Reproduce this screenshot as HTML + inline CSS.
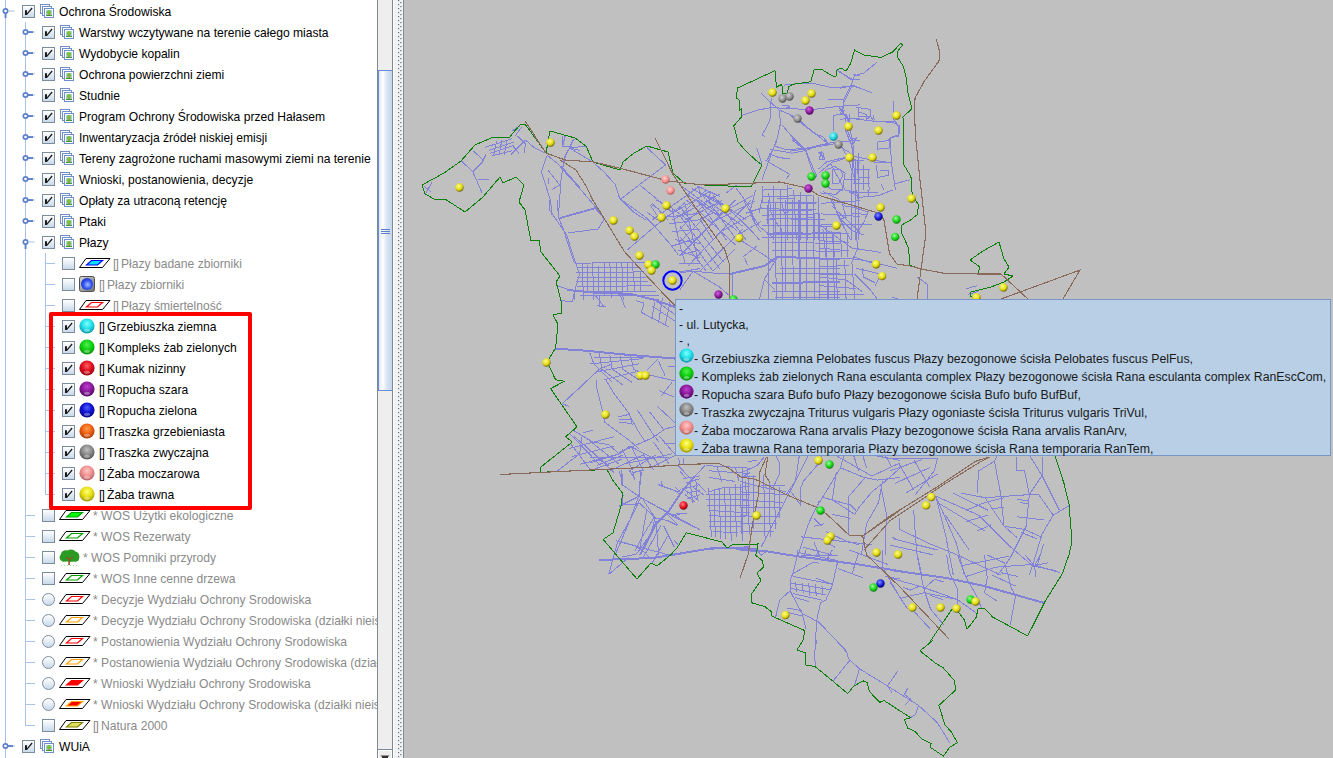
<!DOCTYPE html>
<html><head><meta charset="utf-8">
<style>
html,body{margin:0;padding:0;width:1333px;height:758px;overflow:hidden;background:#fff;font-family:"Liberation Sans", sans-serif;}
#left{position:absolute;left:0;top:0;width:377px;height:758px;background:#fff;overflow:hidden;}
.vl{position:absolute;width:1px;background:#a9c3e6;}
.hl{position:absolute;height:1px;background:#a9c3e6;}
.cb{position:absolute;width:11px;height:11px;border:1px solid #7d8c9b;background:linear-gradient(#ffffff,#c9d9ea);}
.rb{position:absolute;width:11px;height:11px;border:1px solid #7d8c9b;border-radius:50%;background:linear-gradient(#ffffff,#c9d9ea);}
.ic{position:absolute;}
.tx{position:absolute;font-size:12.1px;line-height:18px;white-space:nowrap;}
#redbox{position:absolute;left:49px;top:312px;width:195px;height:190px;border:4px solid #ff0000;border-radius:2px;}
#sb{position:absolute;left:377px;top:0;width:14px;height:758px;border-left:1px solid #7b8a99;border-right:1px solid #7b8a99;background:#eeeeee;}
#thumb{position:absolute;left:0;top:70px;width:14px;height:321px;background:linear-gradient(90deg,#d4e1f1 0%,#ffffff 35%,#dce7f3 60%,#c4d6ec 100%);}
#split{position:absolute;left:393px;top:0;width:10px;height:758px;background:#f2f2f2;border-left:1px solid #fff;}
#splitline{position:absolute;left:403px;top:0;width:1px;height:758px;background:#7b8a99;}
#map{position:absolute;left:404px;top:0;width:929px;height:758px;background:#c0c0c0;overflow:hidden;}
#tip{position:absolute;left:675px;top:299px;width:654px;height:155px;background:#b8cfe6;border:1px solid #7896c8;}
.tl{position:absolute;left:3px;font-size:12.3px;white-space:nowrap;color:#1a1a1a;}
</style></head><body>
<div id="left">
<div class="vl" style="left:5px;top:0;height:758px"></div>
<div class="vl" style="left:25px;top:22px;height:704px"></div>
<div class="vl" style="left:45px;top:253px;height:242px"></div>
<svg class="ic" style="left:1px;top:6px" width="14" height="12" viewBox="0 0 14 12"><circle cx="4.5" cy="5" r="2.2" fill="#fff" stroke="#5b7fc9" stroke-width="1.7"/><rect x="3.6" y="7.2" width="1.9" height="4.8" fill="#5b7fc9"/><rect x="7.5" y="4.5" width="6" height="1" fill="#a9c3e6"/></svg>
<div class="cb" style="left:22px;top:5px"><svg width="13" height="13" style="position:absolute;left:-1px;top:-1px"><path d="M3 5.2 H5 V8.2 L9.6 2.6 L10.6 3.6 L5 10 H3 Z" fill="#1a1a1a"/></svg></div>
<svg class="ic" style="left:40px;top:4px" width="15" height="15" viewBox="0 0 15 15"><rect x="0.5" y="0.5" width="9" height="9" fill="#fff" stroke="#6f8fcb"/><rect x="2.5" y="2.5" width="9" height="9" fill="#fff" stroke="#6f8fcb"/><rect x="4.5" y="4.5" width="9" height="9" fill="#fff" stroke="#6f8fcb"/><rect x="6" y="6" width="6" height="6" fill="#b9d3f0"/><circle cx="9" cy="8.3" r="2.3" fill="#7cc23a"/><rect x="8.4" y="9.8" width="1.3" height="1.4" fill="#c8743a"/><rect x="6" y="10.8" width="6" height="1.2" fill="#3f9a2a"/></svg>
<div class="tx" style="left:59px;top:3px;color:#000">Ochrona Środowiska</div>
<svg class="ic" style="left:21px;top:27px" width="16" height="10" viewBox="0 0 16 10"><circle cx="4.5" cy="5" r="2.2" fill="#fff" stroke="#5b7fc9" stroke-width="1.7"/><rect x="7" y="4.1" width="5" height="1.9" fill="#5b7fc9"/><rect x="12" y="4.5" width="2" height="1" fill="#a9c3e6"/></svg>
<div class="cb" style="left:42px;top:26px"><svg width="13" height="13" style="position:absolute;left:-1px;top:-1px"><path d="M3 5.2 H5 V8.2 L9.6 2.6 L10.6 3.6 L5 10 H3 Z" fill="#1a1a1a"/></svg></div>
<svg class="ic" style="left:60px;top:25px" width="15" height="15" viewBox="0 0 15 15"><rect x="0.5" y="0.5" width="9" height="9" fill="#fff" stroke="#6f8fcb"/><rect x="2.5" y="2.5" width="9" height="9" fill="#fff" stroke="#6f8fcb"/><rect x="4.5" y="4.5" width="9" height="9" fill="#fff" stroke="#6f8fcb"/><rect x="6" y="6" width="6" height="6" fill="#b9d3f0"/><circle cx="9" cy="8.3" r="2.3" fill="#7cc23a"/><rect x="8.4" y="9.8" width="1.3" height="1.4" fill="#c8743a"/><rect x="6" y="10.8" width="6" height="1.2" fill="#3f9a2a"/></svg>
<div class="tx" style="left:79px;top:24px;color:#000">Warstwy wczytywane na terenie całego miasta</div>
<svg class="ic" style="left:21px;top:48px" width="16" height="10" viewBox="0 0 16 10"><circle cx="4.5" cy="5" r="2.2" fill="#fff" stroke="#5b7fc9" stroke-width="1.7"/><rect x="7" y="4.1" width="5" height="1.9" fill="#5b7fc9"/><rect x="12" y="4.5" width="2" height="1" fill="#a9c3e6"/></svg>
<div class="cb" style="left:42px;top:47px"><svg width="13" height="13" style="position:absolute;left:-1px;top:-1px"><path d="M3 5.2 H5 V8.2 L9.6 2.6 L10.6 3.6 L5 10 H3 Z" fill="#1a1a1a"/></svg></div>
<svg class="ic" style="left:60px;top:46px" width="15" height="15" viewBox="0 0 15 15"><rect x="0.5" y="0.5" width="9" height="9" fill="#fff" stroke="#6f8fcb"/><rect x="2.5" y="2.5" width="9" height="9" fill="#fff" stroke="#6f8fcb"/><rect x="4.5" y="4.5" width="9" height="9" fill="#fff" stroke="#6f8fcb"/><rect x="6" y="6" width="6" height="6" fill="#b9d3f0"/><circle cx="9" cy="8.3" r="2.3" fill="#7cc23a"/><rect x="8.4" y="9.8" width="1.3" height="1.4" fill="#c8743a"/><rect x="6" y="10.8" width="6" height="1.2" fill="#3f9a2a"/></svg>
<div class="tx" style="left:79px;top:45px;color:#000">Wydobycie kopalin</div>
<svg class="ic" style="left:21px;top:69px" width="16" height="10" viewBox="0 0 16 10"><circle cx="4.5" cy="5" r="2.2" fill="#fff" stroke="#5b7fc9" stroke-width="1.7"/><rect x="7" y="4.1" width="5" height="1.9" fill="#5b7fc9"/><rect x="12" y="4.5" width="2" height="1" fill="#a9c3e6"/></svg>
<div class="cb" style="left:42px;top:68px"><svg width="13" height="13" style="position:absolute;left:-1px;top:-1px"><path d="M3 5.2 H5 V8.2 L9.6 2.6 L10.6 3.6 L5 10 H3 Z" fill="#1a1a1a"/></svg></div>
<svg class="ic" style="left:60px;top:67px" width="15" height="15" viewBox="0 0 15 15"><rect x="0.5" y="0.5" width="9" height="9" fill="#fff" stroke="#6f8fcb"/><rect x="2.5" y="2.5" width="9" height="9" fill="#fff" stroke="#6f8fcb"/><rect x="4.5" y="4.5" width="9" height="9" fill="#fff" stroke="#6f8fcb"/><rect x="6" y="6" width="6" height="6" fill="#b9d3f0"/><circle cx="9" cy="8.3" r="2.3" fill="#7cc23a"/><rect x="8.4" y="9.8" width="1.3" height="1.4" fill="#c8743a"/><rect x="6" y="10.8" width="6" height="1.2" fill="#3f9a2a"/></svg>
<div class="tx" style="left:79px;top:66px;color:#000">Ochrona powierzchni ziemi</div>
<svg class="ic" style="left:21px;top:90px" width="16" height="10" viewBox="0 0 16 10"><circle cx="4.5" cy="5" r="2.2" fill="#fff" stroke="#5b7fc9" stroke-width="1.7"/><rect x="7" y="4.1" width="5" height="1.9" fill="#5b7fc9"/><rect x="12" y="4.5" width="2" height="1" fill="#a9c3e6"/></svg>
<div class="cb" style="left:42px;top:89px"><svg width="13" height="13" style="position:absolute;left:-1px;top:-1px"><path d="M3 5.2 H5 V8.2 L9.6 2.6 L10.6 3.6 L5 10 H3 Z" fill="#1a1a1a"/></svg></div>
<svg class="ic" style="left:60px;top:88px" width="15" height="15" viewBox="0 0 15 15"><rect x="0.5" y="0.5" width="9" height="9" fill="#fff" stroke="#6f8fcb"/><rect x="2.5" y="2.5" width="9" height="9" fill="#fff" stroke="#6f8fcb"/><rect x="4.5" y="4.5" width="9" height="9" fill="#fff" stroke="#6f8fcb"/><rect x="6" y="6" width="6" height="6" fill="#b9d3f0"/><circle cx="9" cy="8.3" r="2.3" fill="#7cc23a"/><rect x="8.4" y="9.8" width="1.3" height="1.4" fill="#c8743a"/><rect x="6" y="10.8" width="6" height="1.2" fill="#3f9a2a"/></svg>
<div class="tx" style="left:79px;top:87px;color:#000">Studnie</div>
<svg class="ic" style="left:21px;top:111px" width="16" height="10" viewBox="0 0 16 10"><circle cx="4.5" cy="5" r="2.2" fill="#fff" stroke="#5b7fc9" stroke-width="1.7"/><rect x="7" y="4.1" width="5" height="1.9" fill="#5b7fc9"/><rect x="12" y="4.5" width="2" height="1" fill="#a9c3e6"/></svg>
<div class="cb" style="left:42px;top:110px"><svg width="13" height="13" style="position:absolute;left:-1px;top:-1px"><path d="M3 5.2 H5 V8.2 L9.6 2.6 L10.6 3.6 L5 10 H3 Z" fill="#1a1a1a"/></svg></div>
<svg class="ic" style="left:60px;top:109px" width="15" height="15" viewBox="0 0 15 15"><rect x="0.5" y="0.5" width="9" height="9" fill="#fff" stroke="#6f8fcb"/><rect x="2.5" y="2.5" width="9" height="9" fill="#fff" stroke="#6f8fcb"/><rect x="4.5" y="4.5" width="9" height="9" fill="#fff" stroke="#6f8fcb"/><rect x="6" y="6" width="6" height="6" fill="#b9d3f0"/><circle cx="9" cy="8.3" r="2.3" fill="#7cc23a"/><rect x="8.4" y="9.8" width="1.3" height="1.4" fill="#c8743a"/><rect x="6" y="10.8" width="6" height="1.2" fill="#3f9a2a"/></svg>
<div class="tx" style="left:79px;top:108px;color:#000">Program Ochrony Środowiska przed Hałasem</div>
<svg class="ic" style="left:21px;top:132px" width="16" height="10" viewBox="0 0 16 10"><circle cx="4.5" cy="5" r="2.2" fill="#fff" stroke="#5b7fc9" stroke-width="1.7"/><rect x="7" y="4.1" width="5" height="1.9" fill="#5b7fc9"/><rect x="12" y="4.5" width="2" height="1" fill="#a9c3e6"/></svg>
<div class="cb" style="left:42px;top:131px"><svg width="13" height="13" style="position:absolute;left:-1px;top:-1px"><path d="M3 5.2 H5 V8.2 L9.6 2.6 L10.6 3.6 L5 10 H3 Z" fill="#1a1a1a"/></svg></div>
<svg class="ic" style="left:60px;top:130px" width="15" height="15" viewBox="0 0 15 15"><rect x="0.5" y="0.5" width="9" height="9" fill="#fff" stroke="#6f8fcb"/><rect x="2.5" y="2.5" width="9" height="9" fill="#fff" stroke="#6f8fcb"/><rect x="4.5" y="4.5" width="9" height="9" fill="#fff" stroke="#6f8fcb"/><rect x="6" y="6" width="6" height="6" fill="#b9d3f0"/><circle cx="9" cy="8.3" r="2.3" fill="#7cc23a"/><rect x="8.4" y="9.8" width="1.3" height="1.4" fill="#c8743a"/><rect x="6" y="10.8" width="6" height="1.2" fill="#3f9a2a"/></svg>
<div class="tx" style="left:79px;top:129px;color:#000">Inwentaryzacja źródeł niskiej emisji</div>
<svg class="ic" style="left:21px;top:153px" width="16" height="10" viewBox="0 0 16 10"><circle cx="4.5" cy="5" r="2.2" fill="#fff" stroke="#5b7fc9" stroke-width="1.7"/><rect x="7" y="4.1" width="5" height="1.9" fill="#5b7fc9"/><rect x="12" y="4.5" width="2" height="1" fill="#a9c3e6"/></svg>
<div class="cb" style="left:42px;top:152px"><svg width="13" height="13" style="position:absolute;left:-1px;top:-1px"><path d="M3 5.2 H5 V8.2 L9.6 2.6 L10.6 3.6 L5 10 H3 Z" fill="#1a1a1a"/></svg></div>
<svg class="ic" style="left:60px;top:151px" width="15" height="15" viewBox="0 0 15 15"><rect x="0.5" y="0.5" width="9" height="9" fill="#fff" stroke="#6f8fcb"/><rect x="2.5" y="2.5" width="9" height="9" fill="#fff" stroke="#6f8fcb"/><rect x="4.5" y="4.5" width="9" height="9" fill="#fff" stroke="#6f8fcb"/><rect x="6" y="6" width="6" height="6" fill="#b9d3f0"/><circle cx="9" cy="8.3" r="2.3" fill="#7cc23a"/><rect x="8.4" y="9.8" width="1.3" height="1.4" fill="#c8743a"/><rect x="6" y="10.8" width="6" height="1.2" fill="#3f9a2a"/></svg>
<div class="tx" style="left:79px;top:150px;color:#000">Tereny zagrożone ruchami masowymi ziemi na terenie</div>
<svg class="ic" style="left:21px;top:174px" width="16" height="10" viewBox="0 0 16 10"><circle cx="4.5" cy="5" r="2.2" fill="#fff" stroke="#5b7fc9" stroke-width="1.7"/><rect x="7" y="4.1" width="5" height="1.9" fill="#5b7fc9"/><rect x="12" y="4.5" width="2" height="1" fill="#a9c3e6"/></svg>
<div class="cb" style="left:42px;top:173px"><svg width="13" height="13" style="position:absolute;left:-1px;top:-1px"><path d="M3 5.2 H5 V8.2 L9.6 2.6 L10.6 3.6 L5 10 H3 Z" fill="#1a1a1a"/></svg></div>
<svg class="ic" style="left:60px;top:172px" width="15" height="15" viewBox="0 0 15 15"><rect x="0.5" y="0.5" width="9" height="9" fill="#fff" stroke="#6f8fcb"/><rect x="2.5" y="2.5" width="9" height="9" fill="#fff" stroke="#6f8fcb"/><rect x="4.5" y="4.5" width="9" height="9" fill="#fff" stroke="#6f8fcb"/><rect x="6" y="6" width="6" height="6" fill="#b9d3f0"/><circle cx="9" cy="8.3" r="2.3" fill="#7cc23a"/><rect x="8.4" y="9.8" width="1.3" height="1.4" fill="#c8743a"/><rect x="6" y="10.8" width="6" height="1.2" fill="#3f9a2a"/></svg>
<div class="tx" style="left:79px;top:171px;color:#000">Wnioski, postanowienia, decyzje</div>
<svg class="ic" style="left:21px;top:195px" width="16" height="10" viewBox="0 0 16 10"><circle cx="4.5" cy="5" r="2.2" fill="#fff" stroke="#5b7fc9" stroke-width="1.7"/><rect x="7" y="4.1" width="5" height="1.9" fill="#5b7fc9"/><rect x="12" y="4.5" width="2" height="1" fill="#a9c3e6"/></svg>
<div class="cb" style="left:42px;top:194px"><svg width="13" height="13" style="position:absolute;left:-1px;top:-1px"><path d="M3 5.2 H5 V8.2 L9.6 2.6 L10.6 3.6 L5 10 H3 Z" fill="#1a1a1a"/></svg></div>
<svg class="ic" style="left:60px;top:193px" width="15" height="15" viewBox="0 0 15 15"><rect x="0.5" y="0.5" width="9" height="9" fill="#fff" stroke="#6f8fcb"/><rect x="2.5" y="2.5" width="9" height="9" fill="#fff" stroke="#6f8fcb"/><rect x="4.5" y="4.5" width="9" height="9" fill="#fff" stroke="#6f8fcb"/><rect x="6" y="6" width="6" height="6" fill="#b9d3f0"/><circle cx="9" cy="8.3" r="2.3" fill="#7cc23a"/><rect x="8.4" y="9.8" width="1.3" height="1.4" fill="#c8743a"/><rect x="6" y="10.8" width="6" height="1.2" fill="#3f9a2a"/></svg>
<div class="tx" style="left:79px;top:192px;color:#000">Opłaty za utraconą retencję</div>
<svg class="ic" style="left:21px;top:216px" width="16" height="10" viewBox="0 0 16 10"><circle cx="4.5" cy="5" r="2.2" fill="#fff" stroke="#5b7fc9" stroke-width="1.7"/><rect x="7" y="4.1" width="5" height="1.9" fill="#5b7fc9"/><rect x="12" y="4.5" width="2" height="1" fill="#a9c3e6"/></svg>
<div class="cb" style="left:42px;top:215px"><svg width="13" height="13" style="position:absolute;left:-1px;top:-1px"><path d="M3 5.2 H5 V8.2 L9.6 2.6 L10.6 3.6 L5 10 H3 Z" fill="#1a1a1a"/></svg></div>
<svg class="ic" style="left:60px;top:214px" width="15" height="15" viewBox="0 0 15 15"><rect x="0.5" y="0.5" width="9" height="9" fill="#fff" stroke="#6f8fcb"/><rect x="2.5" y="2.5" width="9" height="9" fill="#fff" stroke="#6f8fcb"/><rect x="4.5" y="4.5" width="9" height="9" fill="#fff" stroke="#6f8fcb"/><rect x="6" y="6" width="6" height="6" fill="#b9d3f0"/><circle cx="9" cy="8.3" r="2.3" fill="#7cc23a"/><rect x="8.4" y="9.8" width="1.3" height="1.4" fill="#c8743a"/><rect x="6" y="10.8" width="6" height="1.2" fill="#3f9a2a"/></svg>
<div class="tx" style="left:79px;top:213px;color:#000">Ptaki</div>
<svg class="ic" style="left:21px;top:237px" width="14" height="12" viewBox="0 0 14 12"><circle cx="4.5" cy="5" r="2.2" fill="#fff" stroke="#5b7fc9" stroke-width="1.7"/><rect x="3.6" y="7.2" width="1.9" height="4.8" fill="#5b7fc9"/><rect x="7.5" y="4.5" width="6" height="1" fill="#a9c3e6"/></svg>
<div class="cb" style="left:42px;top:236px"><svg width="13" height="13" style="position:absolute;left:-1px;top:-1px"><path d="M3 5.2 H5 V8.2 L9.6 2.6 L10.6 3.6 L5 10 H3 Z" fill="#1a1a1a"/></svg></div>
<svg class="ic" style="left:60px;top:235px" width="15" height="15" viewBox="0 0 15 15"><rect x="0.5" y="0.5" width="9" height="9" fill="#fff" stroke="#6f8fcb"/><rect x="2.5" y="2.5" width="9" height="9" fill="#fff" stroke="#6f8fcb"/><rect x="4.5" y="4.5" width="9" height="9" fill="#fff" stroke="#6f8fcb"/><rect x="6" y="6" width="6" height="6" fill="#b9d3f0"/><circle cx="9" cy="8.3" r="2.3" fill="#7cc23a"/><rect x="8.4" y="9.8" width="1.3" height="1.4" fill="#c8743a"/><rect x="6" y="10.8" width="6" height="1.2" fill="#3f9a2a"/></svg>
<div class="tx" style="left:79px;top:234px;color:#000">Płazy</div>
<div class="hl" style="left:46px;top:263px;width:9px"></div>
<div class="cb" style="left:62px;top:257px"></div>
<svg class="ic" style="left:79px;top:258px" width="32" height="11" viewBox="0 0 32 11"><path d="M0.5 9.5 L7 0.5 L31 0.5 L23.5 9.5 Z" fill="#fff" stroke="#000" stroke-width="1"/><path d="M7.5 7 L12.5 2.5 L23.5 2.5 L18.5 7 Z" fill="#00e0ff" stroke="#0000ff" stroke-width="1.2"/></svg>
<div class="tx" style="left:113px;top:255px;color:#8a8a8a"><span style="letter-spacing:-0.8px">[]</span><span style="letter-spacing:-0.5px"> </span>Płazy badane zbiorniki</div>
<div class="hl" style="left:46px;top:284px;width:9px"></div>
<div class="cb" style="left:62px;top:278px"></div>
<svg class="ic" style="left:79px;top:276px" width="16" height="16" viewBox="0 0 16 16"><defs><linearGradient id="rbx" x1="0" y1="0" x2="1" y2="1"><stop offset="0" stop-color="#d8d8d8"/><stop offset="1" stop-color="#707070"/></linearGradient><radialGradient id="rbb" cx="0.55" cy="0.55" r="0.6"><stop offset="0" stop-color="#a0c0ff"/><stop offset="0.6" stop-color="#3050f0"/><stop offset="1" stop-color="#1a30c0"/></radialGradient></defs><rect x="0.5" y="0.5" width="15" height="15" rx="2" fill="url(#rbx)" stroke="#505050"/><circle cx="8" cy="8" r="6" fill="url(#rbb)"/></svg>
<div class="tx" style="left:99px;top:276px;color:#8a8a8a"><span style="letter-spacing:-0.8px">[]</span><span style="letter-spacing:-0.5px"> </span>Płazy zbiorniki</div>
<div class="hl" style="left:46px;top:305px;width:9px"></div>
<div class="cb" style="left:62px;top:299px"></div>
<svg class="ic" style="left:79px;top:300px" width="32" height="11" viewBox="0 0 32 11"><path d="M0.5 9.5 L7 0.5 L31 0.5 L23.5 9.5 Z" fill="#fff" stroke="#000" stroke-width="1"/><path d="M7.5 7 L12.5 2.5 L23.5 2.5 L18.5 7 Z" fill="#ffffff" stroke="#ff0000" stroke-width="1.2"/></svg>
<div class="tx" style="left:113px;top:297px;color:#8a8a8a"><span style="letter-spacing:-0.8px">[]</span><span style="letter-spacing:-0.5px"> </span>Płazy śmiertelność</div>
<div class="hl" style="left:46px;top:326px;width:9px"></div>
<div class="cb" style="left:62px;top:320px"><svg width="13" height="13" style="position:absolute;left:-1px;top:-1px"><path d="M3 5.2 H5 V8.2 L9.6 2.6 L10.6 3.6 L5 10 H3 Z" fill="#1a1a1a"/></svg></div>
<div class="ic" style="left:79px;top:318px;width:16px;height:16px"><svg width="16" height="16" viewBox="0 0 16 16" style="display:block"><defs><radialGradient id="g1" cx="0.5" cy="0.35" r="0.6"><stop offset="0" stop-color="#80ffff"/><stop offset="0.55" stop-color="#20e0e8"/><stop offset="1" stop-color="#10a0b0"/></radialGradient></defs><circle cx="8" cy="8" r="7.6" fill="url(#g1)"/><ellipse cx="8" cy="12.3" rx="3" ry="1.6" fill="#ffffff" opacity="0.35"/></svg></div>
<div class="tx" style="left:99px;top:318px;color:#000"><span style="letter-spacing:-0.8px">[]</span><span style="letter-spacing:-0.5px"> </span>Grzebiuszka ziemna</div>
<div class="hl" style="left:46px;top:347px;width:9px"></div>
<div class="cb" style="left:62px;top:341px"><svg width="13" height="13" style="position:absolute;left:-1px;top:-1px"><path d="M3 5.2 H5 V8.2 L9.6 2.6 L10.6 3.6 L5 10 H3 Z" fill="#1a1a1a"/></svg></div>
<div class="ic" style="left:79px;top:339px;width:16px;height:16px"><svg width="16" height="16" viewBox="0 0 16 16" style="display:block"><defs><radialGradient id="g2" cx="0.5" cy="0.35" r="0.6"><stop offset="0" stop-color="#50f050"/><stop offset="0.55" stop-color="#10d010"/><stop offset="1" stop-color="#0a9a0a"/></radialGradient></defs><circle cx="8" cy="8" r="7.6" fill="url(#g2)"/><ellipse cx="8" cy="12.3" rx="3" ry="1.6" fill="#ffffff" opacity="0.35"/></svg></div>
<div class="tx" style="left:99px;top:339px;color:#000"><span style="letter-spacing:-0.8px">[]</span><span style="letter-spacing:-0.5px"> </span>Kompleks żab zielonych</div>
<div class="hl" style="left:46px;top:368px;width:9px"></div>
<div class="cb" style="left:62px;top:362px"><svg width="13" height="13" style="position:absolute;left:-1px;top:-1px"><path d="M3 5.2 H5 V8.2 L9.6 2.6 L10.6 3.6 L5 10 H3 Z" fill="#1a1a1a"/></svg></div>
<div class="ic" style="left:79px;top:360px;width:16px;height:16px"><svg width="16" height="16" viewBox="0 0 16 16" style="display:block"><defs><radialGradient id="g3" cx="0.5" cy="0.35" r="0.6"><stop offset="0" stop-color="#ff6060"/><stop offset="0.55" stop-color="#e01020"/><stop offset="1" stop-color="#a00010"/></radialGradient></defs><circle cx="8" cy="8" r="7.6" fill="url(#g3)"/><ellipse cx="8" cy="12.3" rx="3" ry="1.6" fill="#ffffff" opacity="0.35"/></svg></div>
<div class="tx" style="left:99px;top:360px;color:#000"><span style="letter-spacing:-0.8px">[]</span><span style="letter-spacing:-0.5px"> </span>Kumak nizinny</div>
<div class="hl" style="left:46px;top:389px;width:9px"></div>
<div class="cb" style="left:62px;top:383px"><svg width="13" height="13" style="position:absolute;left:-1px;top:-1px"><path d="M3 5.2 H5 V8.2 L9.6 2.6 L10.6 3.6 L5 10 H3 Z" fill="#1a1a1a"/></svg></div>
<div class="ic" style="left:79px;top:381px;width:16px;height:16px"><svg width="16" height="16" viewBox="0 0 16 16" style="display:block"><defs><radialGradient id="g4" cx="0.5" cy="0.35" r="0.6"><stop offset="0" stop-color="#c040d0"/><stop offset="0.55" stop-color="#8a1a9a"/><stop offset="1" stop-color="#5a0a6a"/></radialGradient></defs><circle cx="8" cy="8" r="7.6" fill="url(#g4)"/><ellipse cx="8" cy="12.3" rx="3" ry="1.6" fill="#ffffff" opacity="0.35"/></svg></div>
<div class="tx" style="left:99px;top:381px;color:#000"><span style="letter-spacing:-0.8px">[]</span><span style="letter-spacing:-0.5px"> </span>Ropucha szara</div>
<div class="hl" style="left:46px;top:410px;width:9px"></div>
<div class="cb" style="left:62px;top:404px"><svg width="13" height="13" style="position:absolute;left:-1px;top:-1px"><path d="M3 5.2 H5 V8.2 L9.6 2.6 L10.6 3.6 L5 10 H3 Z" fill="#1a1a1a"/></svg></div>
<div class="ic" style="left:79px;top:402px;width:16px;height:16px"><svg width="16" height="16" viewBox="0 0 16 16" style="display:block"><defs><radialGradient id="g5" cx="0.5" cy="0.35" r="0.6"><stop offset="0" stop-color="#5060ff"/><stop offset="0.55" stop-color="#1010d0"/><stop offset="1" stop-color="#0a0a90"/></radialGradient></defs><circle cx="8" cy="8" r="7.6" fill="url(#g5)"/><ellipse cx="8" cy="12.3" rx="3" ry="1.6" fill="#ffffff" opacity="0.35"/></svg></div>
<div class="tx" style="left:99px;top:402px;color:#000"><span style="letter-spacing:-0.8px">[]</span><span style="letter-spacing:-0.5px"> </span>Ropucha zielona</div>
<div class="hl" style="left:46px;top:431px;width:9px"></div>
<div class="cb" style="left:62px;top:425px"><svg width="13" height="13" style="position:absolute;left:-1px;top:-1px"><path d="M3 5.2 H5 V8.2 L9.6 2.6 L10.6 3.6 L5 10 H3 Z" fill="#1a1a1a"/></svg></div>
<div class="ic" style="left:79px;top:423px;width:16px;height:16px"><svg width="16" height="16" viewBox="0 0 16 16" style="display:block"><defs><radialGradient id="g6" cx="0.5" cy="0.35" r="0.6"><stop offset="0" stop-color="#ffa050"/><stop offset="0.55" stop-color="#f06010"/><stop offset="1" stop-color="#b04008"/></radialGradient></defs><circle cx="8" cy="8" r="7.6" fill="url(#g6)"/><ellipse cx="8" cy="12.3" rx="3" ry="1.6" fill="#ffffff" opacity="0.35"/></svg></div>
<div class="tx" style="left:99px;top:423px;color:#000"><span style="letter-spacing:-0.8px">[]</span><span style="letter-spacing:-0.5px"> </span>Traszka grzebieniasta</div>
<div class="hl" style="left:46px;top:452px;width:9px"></div>
<div class="cb" style="left:62px;top:446px"><svg width="13" height="13" style="position:absolute;left:-1px;top:-1px"><path d="M3 5.2 H5 V8.2 L9.6 2.6 L10.6 3.6 L5 10 H3 Z" fill="#1a1a1a"/></svg></div>
<div class="ic" style="left:79px;top:444px;width:16px;height:16px"><svg width="16" height="16" viewBox="0 0 16 16" style="display:block"><defs><radialGradient id="g7" cx="0.5" cy="0.35" r="0.6"><stop offset="0" stop-color="#c0c0c0"/><stop offset="0.55" stop-color="#8a8a8a"/><stop offset="1" stop-color="#5a5a5a"/></radialGradient></defs><circle cx="8" cy="8" r="7.6" fill="url(#g7)"/><ellipse cx="8" cy="12.3" rx="3" ry="1.6" fill="#ffffff" opacity="0.35"/></svg></div>
<div class="tx" style="left:99px;top:444px;color:#000"><span style="letter-spacing:-0.8px">[]</span><span style="letter-spacing:-0.5px"> </span>Traszka zwyczajna</div>
<div class="hl" style="left:46px;top:473px;width:9px"></div>
<div class="cb" style="left:62px;top:467px"><svg width="13" height="13" style="position:absolute;left:-1px;top:-1px"><path d="M3 5.2 H5 V8.2 L9.6 2.6 L10.6 3.6 L5 10 H3 Z" fill="#1a1a1a"/></svg></div>
<div class="ic" style="left:79px;top:465px;width:16px;height:16px"><svg width="16" height="16" viewBox="0 0 16 16" style="display:block"><defs><radialGradient id="g8" cx="0.5" cy="0.35" r="0.6"><stop offset="0" stop-color="#ffc8c8"/><stop offset="0.55" stop-color="#f09090"/><stop offset="1" stop-color="#c06a6a"/></radialGradient></defs><circle cx="8" cy="8" r="7.6" fill="url(#g8)"/><ellipse cx="8" cy="12.3" rx="3" ry="1.6" fill="#ffffff" opacity="0.35"/></svg></div>
<div class="tx" style="left:99px;top:465px;color:#000"><span style="letter-spacing:-0.8px">[]</span><span style="letter-spacing:-0.5px"> </span>Żaba moczarowa</div>
<div class="hl" style="left:46px;top:494px;width:9px"></div>
<div class="cb" style="left:62px;top:488px"><svg width="13" height="13" style="position:absolute;left:-1px;top:-1px"><path d="M3 5.2 H5 V8.2 L9.6 2.6 L10.6 3.6 L5 10 H3 Z" fill="#1a1a1a"/></svg></div>
<div class="ic" style="left:79px;top:486px;width:16px;height:16px"><svg width="16" height="16" viewBox="0 0 16 16" style="display:block"><defs><radialGradient id="g9" cx="0.5" cy="0.35" r="0.6"><stop offset="0" stop-color="#ffff80"/><stop offset="0.55" stop-color="#e8e010"/><stop offset="1" stop-color="#a8a000"/></radialGradient></defs><circle cx="8" cy="8" r="7.6" fill="url(#g9)"/><ellipse cx="8" cy="12.3" rx="3" ry="1.6" fill="#ffffff" opacity="0.35"/></svg></div>
<div class="tx" style="left:99px;top:486px;color:#000"><span style="letter-spacing:-0.8px">[]</span><span style="letter-spacing:-0.5px"> </span>Żaba trawna</div>
<div class="hl" style="left:26px;top:515px;width:9px"></div>
<div class="cb" style="left:42px;top:509px"></div>
<svg class="ic" style="left:59px;top:510px" width="32" height="11" viewBox="0 0 32 11"><path d="M0.5 9.5 L7 0.5 L31 0.5 L23.5 9.5 Z" fill="#fff" stroke="#000" stroke-width="1"/><path d="M7.5 7 L12.5 2.5 L23.5 2.5 L18.5 7 Z" fill="#00ff00" stroke="#00a000" stroke-width="1.2"/></svg>
<div class="tx" style="left:93px;top:507px;color:#8a8a8a">* WOS Użytki ekologiczne</div>
<div class="hl" style="left:26px;top:536px;width:9px"></div>
<div class="cb" style="left:42px;top:530px"></div>
<svg class="ic" style="left:59px;top:531px" width="32" height="11" viewBox="0 0 32 11"><path d="M0.5 9.5 L7 0.5 L31 0.5 L23.5 9.5 Z" fill="#fff" stroke="#000" stroke-width="1"/><path d="M7.5 7 L12.5 2.5 L23.5 2.5 L18.5 7 Z" fill="#ffffff" stroke="#00a000" stroke-width="1.2"/></svg>
<div class="tx" style="left:93px;top:528px;color:#8a8a8a">* WOS Rezerwaty</div>
<div class="hl" style="left:26px;top:557px;width:9px"></div>
<div class="cb" style="left:42px;top:551px"></div>
<svg class="ic" style="left:59px;top:549px" width="21" height="17" viewBox="0 0 21 17"><path d="M3 12 C0 11 0 7 2 5.5 C2 2 6 0.5 8.5 1.5 C11 -0.2 15 0.5 16.5 2.5 C20 3 21 7 20 10 C20 12.5 17 13 15 12.5 C13 13 8 13 6 12.5 C5 13 3.5 13 3 12 Z" fill="#2a9a22"/><path d="M10 16 L10.5 10 M10.5 11 L7.5 8 M10.5 10.5 L14 7.5" stroke="#8a5a2a" stroke-width="1.6" fill="none"/><path d="M2 16.5 H20" stroke="#7ad070" stroke-width="0.8" stroke-dasharray="1 2"/></svg>
<div class="tx" style="left:83px;top:549px;color:#8a8a8a">* WOS Pomniki przyrody</div>
<div class="hl" style="left:26px;top:578px;width:9px"></div>
<div class="cb" style="left:42px;top:572px"></div>
<svg class="ic" style="left:59px;top:573px" width="32" height="11" viewBox="0 0 32 11"><path d="M0.5 9.5 L7 0.5 L31 0.5 L23.5 9.5 Z" fill="#fff" stroke="#000" stroke-width="1"/><path d="M7.5 7 L12.5 2.5 L23.5 2.5 L18.5 7 Z" fill="#ffffff" stroke="#00a000" stroke-width="1.2"/></svg>
<div class="tx" style="left:93px;top:570px;color:#8a8a8a">* WOS Inne cenne drzewa</div>
<div class="hl" style="left:26px;top:599px;width:9px"></div>
<div class="rb" style="left:42px;top:593px"></div>
<svg class="ic" style="left:59px;top:594px" width="32" height="11" viewBox="0 0 32 11"><path d="M0.5 9.5 L7 0.5 L31 0.5 L23.5 9.5 Z" fill="#fff" stroke="#000" stroke-width="1"/><path d="M7.5 7 L12.5 2.5 L23.5 2.5 L18.5 7 Z" fill="#ffffff" stroke="#ff0000" stroke-width="1.2"/></svg>
<div class="tx" style="left:93px;top:591px;color:#8a8a8a">* Decyzje Wydziału Ochrony Srodowiska</div>
<div class="hl" style="left:26px;top:620px;width:9px"></div>
<div class="rb" style="left:42px;top:614px"></div>
<svg class="ic" style="left:59px;top:615px" width="32" height="11" viewBox="0 0 32 11"><path d="M0.5 9.5 L7 0.5 L31 0.5 L23.5 9.5 Z" fill="#fff" stroke="#000" stroke-width="1"/><path d="M7.5 7 L12.5 2.5 L23.5 2.5 L18.5 7 Z" fill="#ffffff" stroke="#ffa000" stroke-width="1.2"/></svg>
<div class="tx" style="left:93px;top:612px;color:#8a8a8a">* Decyzje Wydziału Ochrony Srodowiska (działki nieistniejące)</div>
<div class="hl" style="left:26px;top:641px;width:9px"></div>
<div class="rb" style="left:42px;top:635px"></div>
<svg class="ic" style="left:59px;top:636px" width="32" height="11" viewBox="0 0 32 11"><path d="M0.5 9.5 L7 0.5 L31 0.5 L23.5 9.5 Z" fill="#fff" stroke="#000" stroke-width="1"/><path d="M7.5 7 L12.5 2.5 L23.5 2.5 L18.5 7 Z" fill="#ffffff" stroke="#ff0000" stroke-width="1.2"/></svg>
<div class="tx" style="left:93px;top:633px;color:#8a8a8a">* Postanowienia Wydziału Ochrony Srodowiska</div>
<div class="hl" style="left:26px;top:662px;width:9px"></div>
<div class="rb" style="left:42px;top:656px"></div>
<svg class="ic" style="left:59px;top:657px" width="32" height="11" viewBox="0 0 32 11"><path d="M0.5 9.5 L7 0.5 L31 0.5 L23.5 9.5 Z" fill="#fff" stroke="#000" stroke-width="1"/><path d="M7.5 7 L12.5 2.5 L23.5 2.5 L18.5 7 Z" fill="#ffffff" stroke="#ffa000" stroke-width="1.2"/></svg>
<div class="tx" style="left:93px;top:654px;color:#8a8a8a">* Postanowienia Wydziału Ochrony Srodowiska (działki nieistniejące)</div>
<div class="hl" style="left:26px;top:683px;width:9px"></div>
<div class="rb" style="left:42px;top:677px"></div>
<svg class="ic" style="left:59px;top:678px" width="32" height="11" viewBox="0 0 32 11"><path d="M0.5 9.5 L7 0.5 L31 0.5 L23.5 9.5 Z" fill="#fff" stroke="#000" stroke-width="1"/><path d="M7.5 7 L12.5 2.5 L23.5 2.5 L18.5 7 Z" fill="#ff0000" stroke="#ff0000" stroke-width="1.2"/></svg>
<div class="tx" style="left:93px;top:675px;color:#8a8a8a">* Wnioski Wydziału Ochrony Srodowiska</div>
<div class="hl" style="left:26px;top:704px;width:9px"></div>
<div class="rb" style="left:42px;top:698px"></div>
<svg class="ic" style="left:59px;top:699px" width="32" height="11" viewBox="0 0 32 11"><path d="M0.5 9.5 L7 0.5 L31 0.5 L23.5 9.5 Z" fill="#fff" stroke="#000" stroke-width="1"/><path d="M7.5 7 L12.5 2.5 L23.5 2.5 L18.5 7 Z" fill="#ff0000" stroke="#ffa000" stroke-width="1.2"/></svg>
<div class="tx" style="left:93px;top:696px;color:#8a8a8a">* Wnioski Wydziału Ochrony Srodowiska (działki nieistniejące)</div>
<div class="hl" style="left:26px;top:725px;width:9px"></div>
<div class="cb" style="left:42px;top:719px"></div>
<svg class="ic" style="left:59px;top:720px" width="32" height="11" viewBox="0 0 32 11"><path d="M0.5 9.5 L7 0.5 L31 0.5 L23.5 9.5 Z" fill="#fff" stroke="#000" stroke-width="1"/><path d="M7.5 7 L12.5 2.5 L23.5 2.5 L18.5 7 Z" fill="#e0e060" stroke="#808000" stroke-width="1.2"/></svg>
<div class="tx" style="left:93px;top:717px;color:#8a8a8a"><span style="letter-spacing:-0.8px">[]</span><span style="letter-spacing:-0.5px"> </span>Natura 2000</div>
<svg class="ic" style="left:1px;top:741px" width="16" height="10" viewBox="0 0 16 10"><circle cx="4.5" cy="5" r="2.2" fill="#fff" stroke="#5b7fc9" stroke-width="1.7"/><rect x="7" y="4.1" width="5" height="1.9" fill="#5b7fc9"/><rect x="12" y="4.5" width="2" height="1" fill="#a9c3e6"/></svg>
<div class="cb" style="left:22px;top:740px"><svg width="13" height="13" style="position:absolute;left:-1px;top:-1px"><path d="M3 5.2 H5 V8.2 L9.6 2.6 L10.6 3.6 L5 10 H3 Z" fill="#1a1a1a"/></svg></div>
<svg class="ic" style="left:40px;top:739px" width="15" height="15" viewBox="0 0 15 15"><rect x="0.5" y="0.5" width="9" height="9" fill="#fff" stroke="#6f8fcb"/><rect x="2.5" y="2.5" width="9" height="9" fill="#fff" stroke="#6f8fcb"/><rect x="4.5" y="4.5" width="9" height="9" fill="#fff" stroke="#6f8fcb"/><rect x="6" y="6" width="6" height="6" fill="#b9d3f0"/><circle cx="9" cy="8.3" r="2.3" fill="#7cc23a"/><rect x="8.4" y="9.8" width="1.3" height="1.4" fill="#c8743a"/><rect x="6" y="10.8" width="6" height="1.2" fill="#3f9a2a"/></svg>
<div class="tx" style="left:59px;top:738px;color:#000">WUiA</div>
<div id="redbox"></div>
</div>
<div id="sb">
 <div id="thumb"><div style="position:absolute;left:0;top:0;width:1px;height:321px;background:#6b8bd0"></div>
 <div style="position:absolute;left:0;top:0;width:14px;height:1px;background:#6b8bd0"></div>
 <div style="position:absolute;left:0;top:320px;width:14px;height:1px;background:#6b8bd0"></div>
 <div style="position:absolute;left:3px;top:159px;width:9px;height:1px;background:#5b7fc9"></div>
 <div style="position:absolute;left:3px;top:161px;width:9px;height:1px;background:#5b7fc9"></div>
 <div style="position:absolute;left:3px;top:163px;width:9px;height:1px;background:#5b7fc9"></div>
 </div>
 <div style="position:absolute;left:0;top:749px;width:14px;height:1px;background:#7b8a99"></div>
 <div style="position:absolute;left:0;top:750px;width:14px;height:8px;background:#fff"></div>
 <div style="position:absolute;left:1px;top:751px;width:12px;height:7px;background:#eee"></div>
 <svg style="position:absolute;left:2px;top:755px" width="11" height="3"><path d="M0.5 0.5 H9.5 L8.5 1.5 H1.5 Z M2 1.2 H8 V3 H2 Z" fill="#333"/></svg>
</div>
<div id="split"><svg width="10" height="758" style="position:absolute;left:0;top:0"><defs><pattern id="sd" x="0" y="0" width="10" height="4" patternUnits="userSpaceOnUse"><rect x="4" y="0" width="1.2" height="1.2" fill="#5d6d7e"/><rect x="6.2" y="2" width="1.2" height="1.2" fill="#5d6d7e"/></pattern></defs><rect x="0" y="0" width="10" height="758" fill="url(#sd)"/></svg></div>
<div id="splitline"></div>
<div id="map">
<svg width="929" height="758" viewBox="404 0 929 758" style="position:absolute;left:0;top:0" shape-rendering="crispEdges">
<defs>
<radialGradient id="myellow" cx="0.4" cy="0.35" r="0.7"><stop offset="0" stop-color="#ffff80"/><stop offset="0.6" stop-color="#e0d812"/><stop offset="1" stop-color="#5a5000"/></radialGradient>
<radialGradient id="mgray" cx="0.4" cy="0.35" r="0.7"><stop offset="0" stop-color="#d0d0d0"/><stop offset="0.6" stop-color="#8c8c8c"/><stop offset="1" stop-color="#404040"/></radialGradient>
<radialGradient id="mpurple" cx="0.4" cy="0.35" r="0.7"><stop offset="0" stop-color="#d060e0"/><stop offset="0.6" stop-color="#8a1a9a"/><stop offset="1" stop-color="#400050"/></radialGradient>
<radialGradient id="mcyan" cx="0.4" cy="0.35" r="0.7"><stop offset="0" stop-color="#90ffff"/><stop offset="0.6" stop-color="#20d0e0"/><stop offset="1" stop-color="#0a7080"/></radialGradient>
<radialGradient id="mgreen" cx="0.4" cy="0.35" r="0.7"><stop offset="0" stop-color="#90ff90"/><stop offset="0.6" stop-color="#18d018"/><stop offset="1" stop-color="#0a700a"/></radialGradient>
<radialGradient id="mblue" cx="0.4" cy="0.35" r="0.7"><stop offset="0" stop-color="#8090ff"/><stop offset="0.6" stop-color="#1818d8"/><stop offset="1" stop-color="#000060"/></radialGradient>
<radialGradient id="mred" cx="0.4" cy="0.35" r="0.7"><stop offset="0" stop-color="#ff8080"/><stop offset="0.6" stop-color="#e01020"/><stop offset="1" stop-color="#700008"/></radialGradient>
<radialGradient id="mpink" cx="0.4" cy="0.35" r="0.7"><stop offset="0" stop-color="#ffd0d0"/><stop offset="0.6" stop-color="#f48c8c"/><stop offset="1" stop-color="#a05050"/></radialGradient>
</defs>
<polyline points="599,560 653,558 713,548 758,549" fill="none" stroke="#8282d8" stroke-width="2" shape-rendering="crispEdges"/>
<polyline points="485.3,147.3 512.3,138.7" fill="none" stroke="#8282d8" stroke-width="1" shape-rendering="crispEdges"/>
<polyline points="488.6,150.6 513.7,142.0" fill="none" stroke="#8282d8" stroke-width="1" shape-rendering="crispEdges"/>
<polyline points="489.9,153.3 514.3,145.3" fill="none" stroke="#8282d8" stroke-width="1" shape-rendering="crispEdges"/>
<polyline points="491.9,155.9 512.3,150.6" fill="none" stroke="#8282d8" stroke-width="1" shape-rendering="crispEdges"/>
<polyline points="496.5,141.4 493.9,154.6" fill="none" stroke="#8282d8" stroke-width="1" shape-rendering="crispEdges"/>
<polyline points="501.8,140.1 499.2,154.6" fill="none" stroke="#8282d8" stroke-width="1" shape-rendering="crispEdges"/>
<polyline points="507.1,140.1 504.4,154.6" fill="none" stroke="#8282d8" stroke-width="1" shape-rendering="crispEdges"/>
<polyline points="512.3,130.8 520.3,125.6" fill="none" stroke="#8282d8" stroke-width="1" shape-rendering="crispEdges"/>
<polyline points="515.0,136.1 521.6,126.9" fill="none" stroke="#8282d8" stroke-width="1" shape-rendering="crispEdges"/>
<polyline points="511.0,154.6 525.5,140.1" fill="none" stroke="#8282d8" stroke-width="1" shape-rendering="crispEdges"/>
<polyline points="517.6,136.1 525.5,144.0 524.2,153.3" fill="none" stroke="#8282d8" stroke-width="1" shape-rendering="crispEdges"/>
<polyline points="525.5,140.1 534.8,148.0 545.3,153.3" fill="none" stroke="#8282d8" stroke-width="1" shape-rendering="crispEdges"/>
<polyline points="512.3,145.3 518.9,153.3" fill="none" stroke="#8282d8" stroke-width="1" shape-rendering="crispEdges"/>
<polyline points="460.9,160.5 472.8,171.7 482.0,192.8" fill="none" stroke="#8282d8" stroke-width="1" shape-rendering="crispEdges"/>
<polyline points="472.8,150.6 483.3,159.9" fill="none" stroke="#8282d8" stroke-width="1" shape-rendering="crispEdges"/>
<polyline points="486.0,154.6 482.0,162.5 472.8,171.7" fill="none" stroke="#8282d8" stroke-width="1" shape-rendering="crispEdges"/>
<polyline points="478.0,179.6 488.6,179.6" fill="none" stroke="#8282d8" stroke-width="1" shape-rendering="crispEdges"/>
<polyline points="424.0,186.2 430.6,191.5" fill="none" stroke="#8282d8" stroke-width="1" shape-rendering="crispEdges"/>
<polyline points="431.9,182.3 424.6,195.5" fill="none" stroke="#8282d8" stroke-width="1" shape-rendering="crispEdges"/>
<polyline points="546.6,155.9 541.4,171.7 550.6,200.8 551.9,215.0" fill="none" stroke="#8282d8" stroke-width="1" shape-rendering="crispEdges"/>
<polyline points="546.6,154.6 562.5,167.8 580.0,187.6" fill="none" stroke="#8282d8" stroke-width="1" shape-rendering="crispEdges"/>
<polyline points="574.4,138.7 565.1,155.9 561.2,177.0 558.5,215.0" fill="none" stroke="#8282d8" stroke-width="1" shape-rendering="crispEdges"/>
<polyline points="565.1,136.1 562.5,146.7 571.7,146.7" fill="none" stroke="#8282d8" stroke-width="1" shape-rendering="crispEdges"/>
<polyline points="570.4,148.0 580.0,150.6" fill="none" stroke="#8282d8" stroke-width="1" shape-rendering="crispEdges"/>
<polyline points="548.0,170.4 559.8,184.9 551.9,189.5" fill="none" stroke="#8282d8" stroke-width="1" shape-rendering="crispEdges"/>
<polyline points="548.0,178.3 548.6,183.6" fill="none" stroke="#8282d8" stroke-width="1" shape-rendering="crispEdges"/>
<polyline points="560.0,166.8 581.1,189.9 595.6,207.1 604.9,220.0" fill="none" stroke="#8282d8" stroke-width="1" shape-rendering="crispEdges"/>
<polyline points="560.0,187.3 564.0,159.6 573.2,139.8" fill="none" stroke="#8282d8" stroke-width="1" shape-rendering="crispEdges"/>
<polyline points="562.0,135.8 562.0,146.4 569.2,146.4" fill="none" stroke="#8282d8" stroke-width="1" shape-rendering="crispEdges"/>
<polyline points="569.2,147.7 586.4,146.4" fill="none" stroke="#8282d8" stroke-width="1" shape-rendering="crispEdges"/>
<polyline points="569.2,147.7 593.0,162.2 603.5,171.5 615.4,184.6 619.4,197.8 633.9,212.3 645.8,220.0" fill="none" stroke="#8282d8" stroke-width="1" shape-rendering="crispEdges"/>
<polyline points="620.7,199.2 647.1,178.7 665.5,164.9" fill="none" stroke="#8282d8" stroke-width="1" shape-rendering="crispEdges"/>
<polyline points="647.1,147.7 665.5,164.9" fill="none" stroke="#8282d8" stroke-width="1" shape-rendering="crispEdges"/>
<polyline points="639.2,184.6 660.3,201.8 672.1,212.3" fill="none" stroke="#8282d8" stroke-width="1" shape-rendering="crispEdges"/>
<polyline points="560.0,217.6 595.6,207.7" fill="none" stroke="#8282d8" stroke-width="1" shape-rendering="crispEdges"/>
<polyline points="652.3,220.0 699.8,186.0" fill="none" stroke="#8282d8" stroke-width="1" shape-rendering="crispEdges"/>
<polyline points="660.3,220.0 710.4,191.2" fill="none" stroke="#8282d8" stroke-width="1" shape-rendering="crispEdges"/>
<polyline points="672.1,220.0 720.0,193.9" fill="none" stroke="#8282d8" stroke-width="1" shape-rendering="crispEdges"/>
<polyline points="685.3,220.0 720.0,201.8" fill="none" stroke="#8282d8" stroke-width="1" shape-rendering="crispEdges"/>
<polyline points="698.5,220.0 720.0,209.7" fill="none" stroke="#8282d8" stroke-width="1" shape-rendering="crispEdges"/>
<polyline points="681.4,186.0 720.0,215.0" fill="none" stroke="#8282d8" stroke-width="1" shape-rendering="crispEdges"/>
<polyline points="686.6,193.9 713.0,212.3" fill="none" stroke="#8282d8" stroke-width="1" shape-rendering="crispEdges"/>
<polyline points="691.9,188.6 720.0,204.4" fill="none" stroke="#8282d8" stroke-width="1" shape-rendering="crispEdges"/>
<polyline points="697.2,186.0 720.0,196.5" fill="none" stroke="#8282d8" stroke-width="1" shape-rendering="crispEdges"/>
<polyline points="649.7,204.4 660.3,220.0" fill="none" stroke="#8282d8" stroke-width="1" shape-rendering="crispEdges"/>
<polyline points="652.3,203.1 668.2,220.0" fill="none" stroke="#8282d8" stroke-width="1" shape-rendering="crispEdges"/>
<polyline points="647.1,212.3 657.6,220.0" fill="none" stroke="#8282d8" stroke-width="1" shape-rendering="crispEdges"/>
<polyline points="698.5,186.0 699.8,193.9" fill="none" stroke="#8282d8" stroke-width="1" shape-rendering="crispEdges"/>
<polyline points="710.4,191.2 709.1,201.8" fill="none" stroke="#8282d8" stroke-width="1" shape-rendering="crispEdges"/>
<polyline points="702.5,193.9 705.1,199.2" fill="none" stroke="#8282d8" stroke-width="1" shape-rendering="crispEdges"/>
<polyline points="742.2,115.4 758.0,110.1 771.2,107.5 792.3,108.8 813.5,109.5 839.8,106.2 860.0,104.9" fill="none" stroke="#8282d8" stroke-width="1" shape-rendering="crispEdges"/>
<polyline points="761.3,93.6 769.9,101.6 779.2,110.1 792.3,115.4 801.6,122.0 814.8,133.9 822.7,136.5 828.0,143.1" fill="none" stroke="#8282d8" stroke-width="1" shape-rendering="crispEdges"/>
<polyline points="771.2,98.3 769.9,120.7 762.0,135.2 764.6,136.5" fill="none" stroke="#8282d8" stroke-width="1" shape-rendering="crispEdges"/>
<polyline points="779.2,110.1 780.5,123.3 776.5,141.8 767.3,160.0" fill="none" stroke="#8282d8" stroke-width="1" shape-rendering="crispEdges"/>
<polyline points="781.8,124.6 789.7,133.9 795.0,141.8 805.5,149.7 809.5,160.0" fill="none" stroke="#8282d8" stroke-width="1" shape-rendering="crispEdges"/>
<polyline points="773.9,145.8 785.8,149.7 805.5,148.4 824.0,144.4 837.2,143.8" fill="none" stroke="#8282d8" stroke-width="1" shape-rendering="crispEdges"/>
<polyline points="756.7,147.7 760.7,160.0" fill="none" stroke="#8282d8" stroke-width="1" shape-rendering="crispEdges"/>
<polyline points="768.6,153.7 779.2,157.6 789.7,158.9" fill="none" stroke="#8282d8" stroke-width="1" shape-rendering="crispEdges"/>
<polyline points="781.8,104.9 789.7,106.2" fill="none" stroke="#8282d8" stroke-width="1" shape-rendering="crispEdges"/>
<polyline points="780.5,108.8 789.7,107.5" fill="none" stroke="#8282d8" stroke-width="1" shape-rendering="crispEdges"/>
<polyline points="784.4,85.1 802.9,83.1 812.1,83.1 831.9,87.7 851.7,86.4 860.0,87.7" fill="none" stroke="#8282d8" stroke-width="1" shape-rendering="crispEdges"/>
<polyline points="853.0,74.5 860.0,75.8" fill="none" stroke="#8282d8" stroke-width="1" shape-rendering="crispEdges"/>
<polyline points="851.7,79.8 860.0,79.8" fill="none" stroke="#8282d8" stroke-width="1" shape-rendering="crispEdges"/>
<polyline points="837.2,70.6 853.0,79.8" fill="none" stroke="#8282d8" stroke-width="1" shape-rendering="crispEdges"/>
<polyline points="851.7,86.4 843.8,102.2 842.5,112.8 846.4,118.0 860.0,118.0" fill="none" stroke="#8282d8" stroke-width="1" shape-rendering="crispEdges"/>
<polyline points="828.0,99.6 843.8,99.6" fill="none" stroke="#8282d8" stroke-width="1" shape-rendering="crispEdges"/>
<polyline points="833.2,115.4 833.2,131.2" fill="none" stroke="#8282d8" stroke-width="1" shape-rendering="crispEdges"/>
<polyline points="839.2,107.5 843.8,112.8" fill="none" stroke="#8282d8" stroke-width="1" shape-rendering="crispEdges"/>
<polyline points="845.1,128.6 853.0,149.7" fill="none" stroke="#8282d8" stroke-width="1" shape-rendering="crispEdges"/>
<polyline points="821.4,151.0 822.7,160.0" fill="none" stroke="#8282d8" stroke-width="1" shape-rendering="crispEdges"/>
<polyline points="818.7,152.3 824.0,157.6" fill="none" stroke="#8282d8" stroke-width="1" shape-rendering="crispEdges"/>
<polyline points="851.7,139.2 857.0,137.8" fill="none" stroke="#8282d8" stroke-width="1" shape-rendering="crispEdges"/>
<polyline points="855.7,107.5 860.0,107.5" fill="none" stroke="#8282d8" stroke-width="1" shape-rendering="crispEdges"/>
<polyline points="840.0,71.7 850.6,79.6 859.8,79.6" fill="none" stroke="#8282d8" stroke-width="1" shape-rendering="crispEdges"/>
<polyline points="876.9,62.4 863.7,73.0 854.5,75.6 851.9,83.5 844.0,99.4 842.6,108.6 840.0,113.9" fill="none" stroke="#8282d8" stroke-width="1" shape-rendering="crispEdges"/>
<polyline points="840.0,88.2 853.2,85.5 871.7,92.8" fill="none" stroke="#8282d8" stroke-width="1" shape-rendering="crispEdges"/>
<polyline points="855.8,107.3 870.3,109.3 871.0,116.5 866.4,119.2 866.4,114.5 858.5,111.9 858.5,107.3" fill="none" stroke="#8282d8" stroke-width="1" shape-rendering="crispEdges"/>
<polyline points="840.0,119.2 851.9,118.5 873.0,121.1 892.8,122.5 899.4,125.8 898.0,135.0 890.1,137.6 888.8,140.0" fill="none" stroke="#8282d8" stroke-width="1" shape-rendering="crispEdges"/>
<polyline points="893.4,101.3 894.1,122.5" fill="none" stroke="#8282d8" stroke-width="1" shape-rendering="crispEdges"/>
<polyline points="873.0,115.2 874.3,120.5" fill="none" stroke="#8282d8" stroke-width="1" shape-rendering="crispEdges"/>
<polyline points="845.3,113.9 845.9,121.8" fill="none" stroke="#8282d8" stroke-width="1" shape-rendering="crispEdges"/>
<polyline points="849.9,113.9 849.9,121.8" fill="none" stroke="#8282d8" stroke-width="1" shape-rendering="crispEdges"/>
<polyline points="840.0,108.6 844.0,111.2 841.3,115.2" fill="none" stroke="#8282d8" stroke-width="1" shape-rendering="crispEdges"/>
<polyline points="845.3,129.7 849.2,140.0" fill="none" stroke="#8282d8" stroke-width="1" shape-rendering="crispEdges"/>
<polyline points="850.6,137.6 855.8,140.0" fill="none" stroke="#8282d8" stroke-width="1" shape-rendering="crispEdges"/>
<polyline points="767.3,204.6 768.6,240.0" fill="none" stroke="#8282d8" stroke-width="1" shape-rendering="crispEdges"/>
<polyline points="793.7,190.1 796.3,240.0" fill="none" stroke="#8282d8" stroke-width="1" shape-rendering="crispEdges"/>
<polyline points="813.5,195.4 814.8,240.0" fill="none" stroke="#8282d8" stroke-width="1" shape-rendering="crispEdges"/>
<polyline points="762.0,202.0 792.3,203.3 816.1,203.3" fill="none" stroke="#8282d8" stroke-width="1" shape-rendering="crispEdges"/>
<polyline points="766.0,219.2 814.8,217.8" fill="none" stroke="#8282d8" stroke-width="1" shape-rendering="crispEdges"/>
<polyline points="773.9,232.3 831.9,233.7" fill="none" stroke="#8282d8" stroke-width="1" shape-rendering="crispEdges"/>
<polyline points="762.0,186.2 762.0,203.3" fill="none" stroke="#8282d8" stroke-width="1" shape-rendering="crispEdges"/>
<polyline points="776.5,198.0 795.0,198.0" fill="none" stroke="#8282d8" stroke-width="1" shape-rendering="crispEdges"/>
<polyline points="756.7,147.9 762.0,164.4" fill="none" stroke="#8282d8" stroke-width="1" shape-rendering="crispEdges"/>
<polyline points="776.5,140.0 762.0,179.6" fill="none" stroke="#8282d8" stroke-width="1" shape-rendering="crispEdges"/>
<polyline points="764.6,159.8 789.7,174.3 785.8,179.6" fill="none" stroke="#8282d8" stroke-width="1" shape-rendering="crispEdges"/>
<polyline points="769.9,149.2 792.3,153.2 805.5,150.6 818.7,145.3 831.9,142.6 860.0,140.0" fill="none" stroke="#8282d8" stroke-width="1" shape-rendering="crispEdges"/>
<polyline points="792.3,140.0 805.5,150.6 812.1,170.3 816.1,178.3" fill="none" stroke="#8282d8" stroke-width="1" shape-rendering="crispEdges"/>
<polyline points="818.7,173.0 831.9,162.4 845.1,158.5" fill="none" stroke="#8282d8" stroke-width="1" shape-rendering="crispEdges"/>
<polyline points="838.5,140.0 845.1,153.2 853.0,158.5 860.0,162.4" fill="none" stroke="#8282d8" stroke-width="1" shape-rendering="crispEdges"/>
<polyline points="850.4,140.0 853.0,153.2 851.7,179.6 851.7,240.0" fill="none" stroke="#8282d8" stroke-width="1" shape-rendering="crispEdges"/>
<polyline points="825.3,170.3 834.6,166.4 845.1,173.0 842.5,190.1 829.3,188.8 825.3,170.3" fill="none" stroke="#8282d8" stroke-width="1" shape-rendering="crispEdges"/>
<polyline points="822.7,191.5 838.5,199.4 845.1,206.0 860.0,208.6" fill="none" stroke="#8282d8" stroke-width="1" shape-rendering="crispEdges"/>
<polyline points="831.9,198.0 837.2,213.9 842.5,224.4 850.4,240.0" fill="none" stroke="#8282d8" stroke-width="1" shape-rendering="crispEdges"/>
<polyline points="700.0,192.8 711.9,198.0 726.4,207.3 739.6,219.2 752.8,232.3 759.4,240.0" fill="none" stroke="#8282d8" stroke-width="1" shape-rendering="crispEdges"/>
<polyline points="700.0,195.4 706.6,190.1 710.6,192.8" fill="none" stroke="#8282d8" stroke-width="1" shape-rendering="crispEdges"/>
<polyline points="726.4,192.8 736.9,184.9" fill="none" stroke="#8282d8" stroke-width="1" shape-rendering="crispEdges"/>
<polyline points="700.0,203.3 726.4,240.0" fill="none" stroke="#8282d8" stroke-width="1" shape-rendering="crispEdges"/>
<polyline points="706.6,199.4 736.9,240.0" fill="none" stroke="#8282d8" stroke-width="1" shape-rendering="crispEdges"/>
<polyline points="700.0,219.2 713.2,240.0" fill="none" stroke="#8282d8" stroke-width="1" shape-rendering="crispEdges"/>
<polyline points="713.2,195.4 746.2,240.0" fill="none" stroke="#8282d8" stroke-width="1" shape-rendering="crispEdges"/>
<polyline points="719.8,213.9 752.8,195.4" fill="none" stroke="#8282d8" stroke-width="1" shape-rendering="crispEdges"/>
<polyline points="713.2,221.8 755.4,200.7" fill="none" stroke="#8282d8" stroke-width="1" shape-rendering="crispEdges"/>
<polyline points="719.8,232.3 752.8,213.9" fill="none" stroke="#8282d8" stroke-width="1" shape-rendering="crispEdges"/>
<polyline points="733.0,237.6 760.7,221.8" fill="none" stroke="#8282d8" stroke-width="1" shape-rendering="crispEdges"/>
<polyline points="735.6,187.5 750.1,207.3 755.4,224.4 760.7,232.3" fill="none" stroke="#8282d8" stroke-width="1" shape-rendering="crispEdges"/>
<polyline points="755.4,190.1 750.1,211.2 752.8,219.2 755.4,224.4" fill="none" stroke="#8282d8" stroke-width="1" shape-rendering="crispEdges"/>
<polyline points="773.9,186.2 773.9,240.0" fill="none" stroke="#8282d8" stroke-width="1" shape-rendering="crispEdges"/>
<polyline points="780.5,190.1 781.1,240.0" fill="none" stroke="#8282d8" stroke-width="1" shape-rendering="crispEdges"/>
<polyline points="787.1,184.9 787.1,240.0" fill="none" stroke="#8282d8" stroke-width="1" shape-rendering="crispEdges"/>
<polyline points="800.3,191.5 800.3,240.0" fill="none" stroke="#8282d8" stroke-width="1" shape-rendering="crispEdges"/>
<polyline points="806.9,195.4 807.5,240.0" fill="none" stroke="#8282d8" stroke-width="1" shape-rendering="crispEdges"/>
<polyline points="818.7,196.7 818.7,240.0" fill="none" stroke="#8282d8" stroke-width="1" shape-rendering="crispEdges"/>
<polyline points="762.0,190.1 792.3,188.8" fill="none" stroke="#8282d8" stroke-width="1" shape-rendering="crispEdges"/>
<polyline points="762.0,196.7 812.1,195.4" fill="none" stroke="#8282d8" stroke-width="1" shape-rendering="crispEdges"/>
<polyline points="762.0,208.6 816.1,209.9" fill="none" stroke="#8282d8" stroke-width="1" shape-rendering="crispEdges"/>
<polyline points="762.0,215.2 818.7,213.9" fill="none" stroke="#8282d8" stroke-width="1" shape-rendering="crispEdges"/>
<polyline points="762.0,225.8 818.7,225.8" fill="none" stroke="#8282d8" stroke-width="1" shape-rendering="crispEdges"/>
<polyline points="762.0,237.6 831.9,237.6" fill="none" stroke="#8282d8" stroke-width="1" shape-rendering="crispEdges"/>
<polyline points="768.6,192.8 771.2,213.9 779.2,227.1" fill="none" stroke="#8282d8" stroke-width="1" shape-rendering="crispEdges"/>
<polyline points="781.8,203.3 784.4,213.9 792.3,208.6" fill="none" stroke="#8282d8" stroke-width="1" shape-rendering="crispEdges"/>
<polyline points="821.4,203.3 860.0,200.7" fill="none" stroke="#8282d8" stroke-width="1" shape-rendering="crispEdges"/>
<polyline points="821.4,213.9 860.0,216.5" fill="none" stroke="#8282d8" stroke-width="1" shape-rendering="crispEdges"/>
<polyline points="821.4,224.4 860.0,224.4" fill="none" stroke="#8282d8" stroke-width="1" shape-rendering="crispEdges"/>
<polyline points="831.9,206.0 860.0,232.3" fill="none" stroke="#8282d8" stroke-width="1" shape-rendering="crispEdges"/>
<polyline points="858.3,153.2 858.3,240.0" fill="none" stroke="#8282d8" stroke-width="1" shape-rendering="crispEdges"/>
<polyline points="845.1,179.6 860.0,179.6" fill="none" stroke="#8282d8" stroke-width="1" shape-rendering="crispEdges"/>
<polyline points="845.1,190.1 860.0,192.8" fill="none" stroke="#8282d8" stroke-width="1" shape-rendering="crispEdges"/>
<polyline points="855.7,159.8 855.7,240.0" fill="none" stroke="#8282d8" stroke-width="1" shape-rendering="crispEdges"/>
<polyline points="549.2,200.0 549.9,210.6 554.5,217.2 566.4,234.3 575.6,263.3 579.6,273.9 574.3,292.3 574.3,300.0" fill="none" stroke="#8282d8" stroke-width="1" shape-rendering="crispEdges"/>
<polyline points="557.2,200.0 558.5,217.2 563.7,230.3 574.3,263.3" fill="none" stroke="#8282d8" stroke-width="1" shape-rendering="crispEdges"/>
<polyline points="559.8,218.5 595.4,208.6 604.6,218.5 598.0,229.0 567.7,233.0" fill="none" stroke="#8282d8" stroke-width="1" shape-rendering="crispEdges"/>
<polyline points="621.8,200.0 645.5,217.2 654.8,226.4 671.9,246.2 678.5,255.4" fill="none" stroke="#8282d8" stroke-width="1" shape-rendering="crispEdges"/>
<polyline points="656.1,200.0 671.9,207.9 689.1,221.1" fill="none" stroke="#8282d8" stroke-width="1" shape-rendering="crispEdges"/>
<polyline points="627.1,250.1 654.8,226.4 671.9,213.2 685.1,202.6" fill="none" stroke="#8282d8" stroke-width="1" shape-rendering="crispEdges"/>
<polyline points="557.2,285.8 573.0,291.0 619.2,292.3 645.5,297.6 658.7,300.0" fill="none" stroke="#8282d8" stroke-width="1" shape-rendering="crispEdges"/>
<polyline points="575.6,263.3 645.5,262.0" fill="none" stroke="#8282d8" stroke-width="1" shape-rendering="crispEdges"/>
<polyline points="576.9,267.3 640.3,267.3" fill="none" stroke="#8282d8" stroke-width="1" shape-rendering="crispEdges"/>
<polyline points="575.6,272.6 644.2,271.9" fill="none" stroke="#8282d8" stroke-width="1" shape-rendering="crispEdges"/>
<polyline points="576.9,277.2 645.5,277.2" fill="none" stroke="#8282d8" stroke-width="1" shape-rendering="crispEdges"/>
<polyline points="575.6,281.8 648.2,281.8" fill="none" stroke="#8282d8" stroke-width="1" shape-rendering="crispEdges"/>
<polyline points="576.9,286.4 652.1,285.8" fill="none" stroke="#8282d8" stroke-width="1" shape-rendering="crispEdges"/>
<polyline points="575.6,291.0 656.1,291.0" fill="none" stroke="#8282d8" stroke-width="1" shape-rendering="crispEdges"/>
<polyline points="579.6,295.6 658.7,295.6" fill="none" stroke="#8282d8" stroke-width="1" shape-rendering="crispEdges"/>
<polyline points="582.2,263.3 583.5,300.0" fill="none" stroke="#8282d8" stroke-width="1" shape-rendering="crispEdges"/>
<polyline points="587.5,264.6 587.5,292.3" fill="none" stroke="#8282d8" stroke-width="1" shape-rendering="crispEdges"/>
<polyline points="592.8,263.3 593.4,300.0" fill="none" stroke="#8282d8" stroke-width="1" shape-rendering="crispEdges"/>
<polyline points="598.0,266.0 598.0,292.3" fill="none" stroke="#8282d8" stroke-width="1" shape-rendering="crispEdges"/>
<polyline points="604.6,263.3 604.6,295.0" fill="none" stroke="#8282d8" stroke-width="1" shape-rendering="crispEdges"/>
<polyline points="609.9,263.3 611.2,297.6" fill="none" stroke="#8282d8" stroke-width="1" shape-rendering="crispEdges"/>
<polyline points="616.5,262.0 616.5,292.3" fill="none" stroke="#8282d8" stroke-width="1" shape-rendering="crispEdges"/>
<polyline points="621.8,262.0 623.1,300.0" fill="none" stroke="#8282d8" stroke-width="1" shape-rendering="crispEdges"/>
<polyline points="627.1,262.0 627.1,292.3" fill="none" stroke="#8282d8" stroke-width="1" shape-rendering="crispEdges"/>
<polyline points="632.3,263.3 635.0,291.0" fill="none" stroke="#8282d8" stroke-width="1" shape-rendering="crispEdges"/>
<polyline points="640.3,271.2 640.3,292.3" fill="none" stroke="#8282d8" stroke-width="1" shape-rendering="crispEdges"/>
<polyline points="675.9,272.6 700.0,268.6" fill="none" stroke="#8282d8" stroke-width="1" shape-rendering="crispEdges"/>
<polyline points="671.9,246.2 700.0,236.9" fill="none" stroke="#8282d8" stroke-width="1" shape-rendering="crispEdges"/>
<polyline points="678.5,255.4 700.0,250.1" fill="none" stroke="#8282d8" stroke-width="1" shape-rendering="crispEdges"/>
<polyline points="650.8,204.0 658.7,209.2 664.0,218.5" fill="none" stroke="#8282d8" stroke-width="1" shape-rendering="crispEdges"/>
<polyline points="665.3,217.2 700.0,213.2" fill="none" stroke="#8282d8" stroke-width="1" shape-rendering="crispEdges"/>
<polyline points="669.3,223.7 700.0,219.8" fill="none" stroke="#8282d8" stroke-width="1" shape-rendering="crispEdges"/>
<polyline points="671.9,231.7 700.0,229.0" fill="none" stroke="#8282d8" stroke-width="1" shape-rendering="crispEdges"/>
<polyline points="674.6,239.6 700.0,243.5" fill="none" stroke="#8282d8" stroke-width="1" shape-rendering="crispEdges"/>
<polyline points="678.5,250.1 700.0,258.0" fill="none" stroke="#8282d8" stroke-width="1" shape-rendering="crispEdges"/>
<polyline points="671.9,207.9 678.5,239.6 685.1,263.3" fill="none" stroke="#8282d8" stroke-width="1" shape-rendering="crispEdges"/>
<polyline points="685.1,204.0 691.7,233.0 698.3,262.0" fill="none" stroke="#8282d8" stroke-width="1" shape-rendering="crispEdges"/>
<polyline points="678.5,263.3 700.0,263.3" fill="none" stroke="#8282d8" stroke-width="1" shape-rendering="crispEdges"/>
<polyline points="567.5,290.0 593.9,292.6 630.8,294.0 651.9,299.2 675.7,307.2" fill="none" stroke="#8282d8" stroke-width="2" shape-rendering="crispEdges"/>
<polyline points="555.0,348.7 586.0,350.7 625.5,354.6 675.7,358.6" fill="none" stroke="#8282d8" stroke-width="2" shape-rendering="crispEdges"/>
<polyline points="560.9,300.6 572.8,301.9 573.4,294.0" fill="none" stroke="#8282d8" stroke-width="1" shape-rendering="crispEdges"/>
<polyline points="595.2,295.3 604.4,307.2" fill="none" stroke="#8282d8" stroke-width="1" shape-rendering="crispEdges"/>
<polyline points="599.2,295.3 599.2,307.2" fill="none" stroke="#8282d8" stroke-width="1" shape-rendering="crispEdges"/>
<polyline points="620.3,295.3 625.5,308.5" fill="none" stroke="#8282d8" stroke-width="1" shape-rendering="crispEdges"/>
<polyline points="596.5,305.8 605.8,306.5" fill="none" stroke="#8282d8" stroke-width="1" shape-rendering="crispEdges"/>
<polyline points="636.1,300.6 644.0,303.2 641.4,312.4 669.1,326.9" fill="none" stroke="#8282d8" stroke-width="1" shape-rendering="crispEdges"/>
<polyline points="651.9,297.9 675.7,315.1" fill="none" stroke="#8282d8" stroke-width="1" shape-rendering="crispEdges"/>
<polyline points="651.9,305.8 675.7,321.7" fill="none" stroke="#8282d8" stroke-width="1" shape-rendering="crispEdges"/>
<polyline points="654.6,301.9 651.9,319.0" fill="none" stroke="#8282d8" stroke-width="1" shape-rendering="crispEdges"/>
<polyline points="662.5,297.9 658.5,323.0" fill="none" stroke="#8282d8" stroke-width="1" shape-rendering="crispEdges"/>
<polyline points="670.4,300.6 665.1,325.6" fill="none" stroke="#8282d8" stroke-width="1" shape-rendering="crispEdges"/>
<polyline points="578.0,390.0 599.2,369.2 612.3,363.9" fill="none" stroke="#8282d8" stroke-width="1" shape-rendering="crispEdges"/>
<polyline points="646.6,370.5 658.5,358.6" fill="none" stroke="#8282d8" stroke-width="1" shape-rendering="crispEdges"/>
<polyline points="658.5,361.2 665.1,375.8" fill="none" stroke="#8282d8" stroke-width="1" shape-rendering="crispEdges"/>
<polyline points="667.8,366.5 675.7,366.5" fill="none" stroke="#8282d8" stroke-width="1" shape-rendering="crispEdges"/>
<polyline points="646.6,374.4 675.7,381.0" fill="none" stroke="#8282d8" stroke-width="1" shape-rendering="crispEdges"/>
<polyline points="589.9,353.3 593.9,363.9 612.3,382.3" fill="none" stroke="#8282d8" stroke-width="1" shape-rendering="crispEdges"/>
<polyline points="599.2,353.3 601.8,369.2 622.9,385.0" fill="none" stroke="#8282d8" stroke-width="1" shape-rendering="crispEdges"/>
<polyline points="609.7,354.6 612.3,369.2 632.1,382.3" fill="none" stroke="#8282d8" stroke-width="1" shape-rendering="crispEdges"/>
<polyline points="620.3,356.0 622.9,369.2 638.7,379.7" fill="none" stroke="#8282d8" stroke-width="1" shape-rendering="crispEdges"/>
<polyline points="630.8,356.0 633.5,369.2 645.3,374.4" fill="none" stroke="#8282d8" stroke-width="1" shape-rendering="crispEdges"/>
<polyline points="589.9,363.9 642.7,358.6" fill="none" stroke="#8282d8" stroke-width="1" shape-rendering="crispEdges"/>
<polyline points="596.5,371.8 638.7,363.9" fill="none" stroke="#8282d8" stroke-width="1" shape-rendering="crispEdges"/>
<polyline points="604.4,379.7 636.1,371.8" fill="none" stroke="#8282d8" stroke-width="1" shape-rendering="crispEdges"/>
<polyline points="593.9,357.3 644.0,357.3" fill="none" stroke="#8282d8" stroke-width="1" shape-rendering="crispEdges"/>
<polyline points="587.5,380.0 562.4,403.7 569.0,406.4" fill="none" stroke="#8282d8" stroke-width="1" shape-rendering="crispEdges"/>
<polyline points="596.7,380.0 596.7,387.9 602.0,409.0 604.6,422.2 629.7,440.7 638.9,448.6" fill="none" stroke="#8282d8" stroke-width="1" shape-rendering="crispEdges"/>
<polyline points="606.0,380.0 613.9,393.2 629.7,414.3" fill="none" stroke="#8282d8" stroke-width="1" shape-rendering="crispEdges"/>
<polyline points="658.7,390.6 674.6,397.2" fill="none" stroke="#8282d8" stroke-width="1" shape-rendering="crispEdges"/>
<polyline points="671.9,382.6 661.4,395.8" fill="none" stroke="#8282d8" stroke-width="1" shape-rendering="crispEdges"/>
<polyline points="617.8,416.9 629.7,414.3 632.3,424.9" fill="none" stroke="#8282d8" stroke-width="1" shape-rendering="crispEdges"/>
<polyline points="619.2,419.6 632.3,419.6" fill="none" stroke="#8282d8" stroke-width="1" shape-rendering="crispEdges"/>
<polyline points="619.2,422.2 631.0,423.5" fill="none" stroke="#8282d8" stroke-width="1" shape-rendering="crispEdges"/>
<polyline points="619.2,452.6 652.1,438.0 665.3,428.8 675.9,426.2" fill="none" stroke="#8282d8" stroke-width="1" shape-rendering="crispEdges"/>
<polyline points="637.6,410.3 652.1,432.8 658.7,442.0" fill="none" stroke="#8282d8" stroke-width="1" shape-rendering="crispEdges"/>
<polyline points="649.5,411.7 664.0,430.1" fill="none" stroke="#8282d8" stroke-width="1" shape-rendering="crispEdges"/>
<polyline points="657.4,406.4 675.9,423.5" fill="none" stroke="#8282d8" stroke-width="1" shape-rendering="crispEdges"/>
<polyline points="629.7,415.6 637.6,430.1 645.5,442.0" fill="none" stroke="#8282d8" stroke-width="1" shape-rendering="crispEdges"/>
<polyline points="583.5,432.8 592.8,430.1" fill="none" stroke="#8282d8" stroke-width="1" shape-rendering="crispEdges"/>
<polyline points="573.0,430.1 592.8,442.0 608.6,444.6 619.2,453.9" fill="none" stroke="#8282d8" stroke-width="1" shape-rendering="crispEdges"/>
<polyline points="557.2,471.0 579.6,453.9 582.2,435.4" fill="none" stroke="#8282d8" stroke-width="1" shape-rendering="crispEdges"/>
<polyline points="619.2,453.9 629.7,446.0 654.8,459.2 658.7,465.8" fill="none" stroke="#8282d8" stroke-width="1" shape-rendering="crispEdges"/>
<polyline points="678.5,457.8 679.8,464.4" fill="none" stroke="#8282d8" stroke-width="1" shape-rendering="crispEdges"/>
<polyline points="683.8,457.8 683.8,464.4" fill="none" stroke="#8282d8" stroke-width="1" shape-rendering="crispEdges"/>
<polyline points="678.5,465.8 691.7,480.0" fill="none" stroke="#8282d8" stroke-width="1" shape-rendering="crispEdges"/>
<polyline points="619.2,471.0 621.8,480.0" fill="none" stroke="#8282d8" stroke-width="1" shape-rendering="crispEdges"/>
<polyline points="632.3,471.0 635.0,480.0" fill="none" stroke="#8282d8" stroke-width="1" shape-rendering="crispEdges"/>
<polyline points="569.0,432.8 599.4,464.4" fill="none" stroke="#8282d8" stroke-width="1" shape-rendering="crispEdges"/>
<polyline points="574.3,436.7 608.6,465.8" fill="none" stroke="#8282d8" stroke-width="1" shape-rendering="crispEdges"/>
<polyline points="570.3,443.3 590.1,469.7" fill="none" stroke="#8282d8" stroke-width="1" shape-rendering="crispEdges"/>
<polyline points="579.6,440.7 613.9,472.3" fill="none" stroke="#8282d8" stroke-width="1" shape-rendering="crispEdges"/>
<polyline points="586.2,438.0 619.2,464.4" fill="none" stroke="#8282d8" stroke-width="1" shape-rendering="crispEdges"/>
<polyline points="569.0,448.6 613.9,436.7" fill="none" stroke="#8282d8" stroke-width="1" shape-rendering="crispEdges"/>
<polyline points="571.7,456.5 613.9,446.0" fill="none" stroke="#8282d8" stroke-width="1" shape-rendering="crispEdges"/>
<polyline points="579.6,464.4 619.2,453.9" fill="none" stroke="#8282d8" stroke-width="1" shape-rendering="crispEdges"/>
<polyline points="592.8,469.7 621.8,459.2" fill="none" stroke="#8282d8" stroke-width="1" shape-rendering="crispEdges"/>
<polyline points="621.8,448.6 632.3,469.7" fill="none" stroke="#8282d8" stroke-width="1" shape-rendering="crispEdges"/>
<polyline points="632.3,448.6 642.9,469.7" fill="none" stroke="#8282d8" stroke-width="1" shape-rendering="crispEdges"/>
<polyline points="642.9,453.9 653.5,469.7" fill="none" stroke="#8282d8" stroke-width="1" shape-rendering="crispEdges"/>
<polyline points="653.5,442.0 669.3,464.4" fill="none" stroke="#8282d8" stroke-width="1" shape-rendering="crispEdges"/>
<polyline points="658.7,435.4 674.6,453.9" fill="none" stroke="#8282d8" stroke-width="1" shape-rendering="crispEdges"/>
<polyline points="621.8,464.4 671.9,453.9" fill="none" stroke="#8282d8" stroke-width="1" shape-rendering="crispEdges"/>
<polyline points="664.0,443.3 675.9,443.3" fill="none" stroke="#8282d8" stroke-width="1" shape-rendering="crispEdges"/>
<polyline points="798.7,200.0 800.1,300.0" fill="none" stroke="#8282d8" stroke-width="2" shape-rendering="crispEdges"/>
<polyline points="767.1,234.3 840.0,233.0" fill="none" stroke="#8282d8" stroke-width="2" shape-rendering="crispEdges"/>
<polyline points="772.3,283.1 840.0,281.8" fill="none" stroke="#8282d8" stroke-width="2" shape-rendering="crispEdges"/>
<polyline points="730.1,273.9 764.4,266.0 777.6,256.7 840.0,259.4" fill="none" stroke="#8282d8" stroke-width="2" shape-rendering="crispEdges"/>
<polyline points="680.0,206.6 723.5,262.0" fill="none" stroke="#8282d8" stroke-width="1" shape-rendering="crispEdges"/>
<polyline points="680.0,215.8 719.6,268.6" fill="none" stroke="#8282d8" stroke-width="1" shape-rendering="crispEdges"/>
<polyline points="680.0,226.4 713.0,271.2" fill="none" stroke="#8282d8" stroke-width="1" shape-rendering="crispEdges"/>
<polyline points="680.0,236.9 706.4,271.2" fill="none" stroke="#8282d8" stroke-width="1" shape-rendering="crispEdges"/>
<polyline points="686.6,200.0 735.4,244.9" fill="none" stroke="#8282d8" stroke-width="1" shape-rendering="crispEdges"/>
<polyline points="697.2,200.0 736.7,230.3" fill="none" stroke="#8282d8" stroke-width="1" shape-rendering="crispEdges"/>
<polyline points="706.4,200.0 743.3,226.4" fill="none" stroke="#8282d8" stroke-width="1" shape-rendering="crispEdges"/>
<polyline points="716.9,200.0 746.0,219.8" fill="none" stroke="#8282d8" stroke-width="1" shape-rendering="crispEdges"/>
<polyline points="680.0,242.2 722.2,200.0" fill="none" stroke="#8282d8" stroke-width="1" shape-rendering="crispEdges"/>
<polyline points="680.0,255.4 735.4,200.0" fill="none" stroke="#8282d8" stroke-width="1" shape-rendering="crispEdges"/>
<polyline points="687.9,266.0 751.2,200.0" fill="none" stroke="#8282d8" stroke-width="1" shape-rendering="crispEdges"/>
<polyline points="699.8,271.2 743.3,229.0" fill="none" stroke="#8282d8" stroke-width="1" shape-rendering="crispEdges"/>
<polyline points="713.0,271.2 735.4,248.8" fill="none" stroke="#8282d8" stroke-width="1" shape-rendering="crispEdges"/>
<polyline points="680.0,229.0 709.0,200.0" fill="none" stroke="#8282d8" stroke-width="1" shape-rendering="crispEdges"/>
<polyline points="680.0,215.8 695.8,200.0" fill="none" stroke="#8282d8" stroke-width="1" shape-rendering="crispEdges"/>
<polyline points="768.4,200.0 768.4,300.0" fill="none" stroke="#8282d8" stroke-width="1" shape-rendering="crispEdges"/>
<polyline points="775.0,200.0 776.3,300.0" fill="none" stroke="#8282d8" stroke-width="1" shape-rendering="crispEdges"/>
<polyline points="780.3,200.0 782.9,300.0" fill="none" stroke="#8282d8" stroke-width="1" shape-rendering="crispEdges"/>
<polyline points="785.5,200.0 785.5,292.3" fill="none" stroke="#8282d8" stroke-width="1" shape-rendering="crispEdges"/>
<polyline points="792.1,200.0 793.5,300.0" fill="none" stroke="#8282d8" stroke-width="1" shape-rendering="crispEdges"/>
<polyline points="806.6,200.0 806.6,300.0" fill="none" stroke="#8282d8" stroke-width="1" shape-rendering="crispEdges"/>
<polyline points="813.2,200.0 814.6,300.0" fill="none" stroke="#8282d8" stroke-width="1" shape-rendering="crispEdges"/>
<polyline points="819.8,213.2 819.8,300.0" fill="none" stroke="#8282d8" stroke-width="1" shape-rendering="crispEdges"/>
<polyline points="826.4,226.4 827.8,300.0" fill="none" stroke="#8282d8" stroke-width="1" shape-rendering="crispEdges"/>
<polyline points="833.0,233.0 834.4,300.0" fill="none" stroke="#8282d8" stroke-width="1" shape-rendering="crispEdges"/>
<polyline points="767.1,202.6 817.2,202.6" fill="none" stroke="#8282d8" stroke-width="1" shape-rendering="crispEdges"/>
<polyline points="767.1,210.6 811.9,210.6" fill="none" stroke="#8282d8" stroke-width="1" shape-rendering="crispEdges"/>
<polyline points="769.7,218.5 825.1,219.8" fill="none" stroke="#8282d8" stroke-width="1" shape-rendering="crispEdges"/>
<polyline points="767.1,225.1 840.0,226.4" fill="none" stroke="#8282d8" stroke-width="1" shape-rendering="crispEdges"/>
<polyline points="772.3,242.2 840.0,243.5" fill="none" stroke="#8282d8" stroke-width="1" shape-rendering="crispEdges"/>
<polyline points="772.3,250.1 840.0,251.5" fill="none" stroke="#8282d8" stroke-width="1" shape-rendering="crispEdges"/>
<polyline points="780.3,268.6 840.0,268.6" fill="none" stroke="#8282d8" stroke-width="1" shape-rendering="crispEdges"/>
<polyline points="775.0,273.9 840.0,273.9" fill="none" stroke="#8282d8" stroke-width="1" shape-rendering="crispEdges"/>
<polyline points="772.3,291.0 840.0,291.0" fill="none" stroke="#8282d8" stroke-width="1" shape-rendering="crispEdges"/>
<polyline points="775.0,297.6 840.0,297.6" fill="none" stroke="#8282d8" stroke-width="1" shape-rendering="crispEdges"/>
<polyline points="735.4,236.9 775.0,262.0" fill="none" stroke="#8282d8" stroke-width="1" shape-rendering="crispEdges"/>
<polyline points="743.3,256.7 756.5,246.2" fill="none" stroke="#8282d8" stroke-width="1" shape-rendering="crispEdges"/>
<polyline points="744.6,258.0 747.3,264.6" fill="none" stroke="#8282d8" stroke-width="1" shape-rendering="crispEdges"/>
<polyline points="759.2,300.0 764.4,279.2 777.6,256.7" fill="none" stroke="#8282d8" stroke-width="1" shape-rendering="crispEdges"/>
<polyline points="764.4,279.2 775.0,289.7" fill="none" stroke="#8282d8" stroke-width="1" shape-rendering="crispEdges"/>
<polyline points="680.0,272.6 693.2,271.2 722.2,273.9 730.1,273.9" fill="none" stroke="#8282d8" stroke-width="1" shape-rendering="crispEdges"/>
<polyline points="680.0,289.7 693.2,271.2" fill="none" stroke="#8282d8" stroke-width="1" shape-rendering="crispEdges"/>
<polyline points="693.2,271.2 719.6,287.1 728.8,295.0" fill="none" stroke="#8282d8" stroke-width="1" shape-rendering="crispEdges"/>
<polyline points="732.8,273.9 732.8,300.0" fill="none" stroke="#8282d8" stroke-width="1" shape-rendering="crispEdges"/>
<polyline points="743.3,200.0 759.2,226.4 772.3,236.9" fill="none" stroke="#8282d8" stroke-width="1" shape-rendering="crispEdges"/>
<polyline points="746.0,213.2 761.8,207.9" fill="none" stroke="#8282d8" stroke-width="1" shape-rendering="crispEdges"/>
<polyline points="761.8,200.0 759.2,213.2" fill="none" stroke="#8282d8" stroke-width="1" shape-rendering="crispEdges"/>
<polyline points="820.0,192.9 836.0,194.4 840.3,190.0" fill="none" stroke="#8282d8" stroke-width="1" shape-rendering="crispEdges"/>
<polyline points="847.6,190.0 859.2,197.3 878.0,195.8 892.5,190.0" fill="none" stroke="#8282d8" stroke-width="1" shape-rendering="crispEdges"/>
<polyline points="849.0,192.9 878.0,192.9" fill="none" stroke="#8282d8" stroke-width="1" shape-rendering="crispEdges"/>
<polyline points="856.3,190.0 857.7,198.7" fill="none" stroke="#8282d8" stroke-width="1" shape-rendering="crispEdges"/>
<polyline points="867.9,190.0 869.3,197.3" fill="none" stroke="#8282d8" stroke-width="1" shape-rendering="crispEdges"/>
<polyline points="830.2,198.7 840.3,219.0 851.9,230.6 863.5,235.0" fill="none" stroke="#8282d8" stroke-width="1" shape-rendering="crispEdges"/>
<polyline points="865.0,220.5 856.3,233.5 857.7,248.0 851.9,262.5 854.8,300.0" fill="none" stroke="#8282d8" stroke-width="1" shape-rendering="crispEdges"/>
<polyline points="841.8,201.6 846.1,217.6 838.9,219.0" fill="none" stroke="#8282d8" stroke-width="1" shape-rendering="crispEdges"/>
<polyline points="853.4,207.4 867.9,211.8 865.0,219.0" fill="none" stroke="#8282d8" stroke-width="1" shape-rendering="crispEdges"/>
<polyline points="851.9,213.2 867.9,214.7" fill="none" stroke="#8282d8" stroke-width="1" shape-rendering="crispEdges"/>
<polyline points="851.9,224.8 872.2,224.8" fill="none" stroke="#8282d8" stroke-width="1" shape-rendering="crispEdges"/>
<polyline points="820.0,224.8 831.6,233.5 851.9,248.0 880.9,252.4" fill="none" stroke="#8282d8" stroke-width="1" shape-rendering="crispEdges"/>
<polyline points="820.0,259.6 849.0,258.2 867.9,261.1 896.9,268.3" fill="none" stroke="#8282d8" stroke-width="1" shape-rendering="crispEdges"/>
<polyline points="853.4,256.7 875.1,264.0" fill="none" stroke="#8282d8" stroke-width="1" shape-rendering="crispEdges"/>
<polyline points="856.3,268.3 880.9,274.1 875.1,285.7" fill="none" stroke="#8282d8" stroke-width="1" shape-rendering="crispEdges"/>
<polyline points="862.1,268.3 863.5,277.0 875.1,282.8" fill="none" stroke="#8282d8" stroke-width="1" shape-rendering="crispEdges"/>
<polyline points="820.0,277.0 846.1,279.9 862.1,291.5" fill="none" stroke="#8282d8" stroke-width="1" shape-rendering="crispEdges"/>
<polyline points="854.8,274.1 869.3,288.6 878.0,300.0" fill="none" stroke="#8282d8" stroke-width="1" shape-rendering="crispEdges"/>
<polyline points="892.5,297.3 901.2,300.0" fill="none" stroke="#8282d8" stroke-width="1" shape-rendering="crispEdges"/>
<polyline points="917.2,277.0 927.3,284.3 927.3,300.0" fill="none" stroke="#8282d8" stroke-width="1" shape-rendering="crispEdges"/>
<polyline points="966.5,288.6 976.7,285.7" fill="none" stroke="#8282d8" stroke-width="1" shape-rendering="crispEdges"/>
<polyline points="968.0,294.4 978.1,291.5" fill="none" stroke="#8282d8" stroke-width="1" shape-rendering="crispEdges"/>
<polyline points="820.0,233.5 849.0,233.5" fill="none" stroke="#8282d8" stroke-width="1" shape-rendering="crispEdges"/>
<polyline points="820.0,240.8 849.0,242.2" fill="none" stroke="#8282d8" stroke-width="1" shape-rendering="crispEdges"/>
<polyline points="820.0,248.0 849.0,250.9" fill="none" stroke="#8282d8" stroke-width="1" shape-rendering="crispEdges"/>
<polyline points="822.9,229.2 825.8,256.7" fill="none" stroke="#8282d8" stroke-width="1" shape-rendering="crispEdges"/>
<polyline points="831.6,230.6 834.5,256.7" fill="none" stroke="#8282d8" stroke-width="1" shape-rendering="crispEdges"/>
<polyline points="840.3,232.1 841.8,256.7" fill="none" stroke="#8282d8" stroke-width="1" shape-rendering="crispEdges"/>
<polyline points="847.6,233.5 847.6,256.7" fill="none" stroke="#8282d8" stroke-width="1" shape-rendering="crispEdges"/>
<polyline points="820.0,266.9 849.0,265.4" fill="none" stroke="#8282d8" stroke-width="1" shape-rendering="crispEdges"/>
<polyline points="820.0,274.1 851.9,274.1" fill="none" stroke="#8282d8" stroke-width="1" shape-rendering="crispEdges"/>
<polyline points="820.0,285.7 856.3,288.6" fill="none" stroke="#8282d8" stroke-width="1" shape-rendering="crispEdges"/>
<polyline points="820.0,294.4 863.5,294.4" fill="none" stroke="#8282d8" stroke-width="1" shape-rendering="crispEdges"/>
<polyline points="827.3,259.6 828.7,300.0" fill="none" stroke="#8282d8" stroke-width="1" shape-rendering="crispEdges"/>
<polyline points="836.0,259.6 837.4,300.0" fill="none" stroke="#8282d8" stroke-width="1" shape-rendering="crispEdges"/>
<polyline points="844.7,259.6 846.1,300.0" fill="none" stroke="#8282d8" stroke-width="1" shape-rendering="crispEdges"/>
<polyline points="690.3,481.4 679.7,494.6 669.2,510.4 656.0,523.6 648.0,539.4 640.1,555.0" fill="none" stroke="#8282d8" stroke-width="2" shape-rendering="crispEdges"/>
<polyline points="671.8,555.0 708.7,548.7 750.0,547.3" fill="none" stroke="#8282d8" stroke-width="2" shape-rendering="crispEdges"/>
<polyline points="704.8,465.6 690.3,481.4" fill="none" stroke="#8282d8" stroke-width="1" shape-rendering="crispEdges"/>
<polyline points="590.0,462.9 616.4,455.0" fill="none" stroke="#8282d8" stroke-width="1" shape-rendering="crispEdges"/>
<polyline points="590.0,457.6 669.2,457.6" fill="none" stroke="#8282d8" stroke-width="1" shape-rendering="crispEdges"/>
<polyline points="596.6,465.6 623.0,455.0" fill="none" stroke="#8282d8" stroke-width="1" shape-rendering="crispEdges"/>
<polyline points="609.8,470.8 642.8,455.0" fill="none" stroke="#8282d8" stroke-width="1" shape-rendering="crispEdges"/>
<polyline points="629.6,470.8 656.0,455.0" fill="none" stroke="#8282d8" stroke-width="1" shape-rendering="crispEdges"/>
<polyline points="649.4,468.2 675.8,455.0" fill="none" stroke="#8282d8" stroke-width="1" shape-rendering="crispEdges"/>
<polyline points="621.7,470.8 623.0,485.3 640.1,497.2 669.2,513.0 699.5,529.5" fill="none" stroke="#8282d8" stroke-width="1" shape-rendering="crispEdges"/>
<polyline points="641.5,472.2 638.8,495.9 629.6,521.0 615.1,555.0" fill="none" stroke="#8282d8" stroke-width="1" shape-rendering="crispEdges"/>
<polyline points="621.7,505.1 640.1,503.8 653.3,515.7 656.0,523.6" fill="none" stroke="#8282d8" stroke-width="1" shape-rendering="crispEdges"/>
<polyline points="658.6,485.3 674.4,490.6 681.0,494.6" fill="none" stroke="#8282d8" stroke-width="1" shape-rendering="crispEdges"/>
<polyline points="661.2,481.4 662.6,486.7" fill="none" stroke="#8282d8" stroke-width="1" shape-rendering="crispEdges"/>
<polyline points="616.4,540.8 640.1,547.3 669.2,555.0" fill="none" stroke="#8282d8" stroke-width="1" shape-rendering="crispEdges"/>
<polyline points="646.7,510.4 640.1,547.3" fill="none" stroke="#8282d8" stroke-width="1" shape-rendering="crispEdges"/>
<polyline points="656.0,521.0 658.6,555.0" fill="none" stroke="#8282d8" stroke-width="1" shape-rendering="crispEdges"/>
<polyline points="663.9,526.2 674.4,547.3" fill="none" stroke="#8282d8" stroke-width="1" shape-rendering="crispEdges"/>
<polyline points="671.8,514.4 686.3,513.0" fill="none" stroke="#8282d8" stroke-width="1" shape-rendering="crispEdges"/>
<polyline points="679.7,470.8 686.3,478.7" fill="none" stroke="#8282d8" stroke-width="1" shape-rendering="crispEdges"/>
<polyline points="682.3,488.0 699.5,501.2" fill="none" stroke="#8282d8" stroke-width="1" shape-rendering="crispEdges"/>
<polyline points="685.0,494.6 695.5,502.5" fill="none" stroke="#8282d8" stroke-width="1" shape-rendering="crispEdges"/>
<polyline points="690.3,485.3 703.5,494.6" fill="none" stroke="#8282d8" stroke-width="1" shape-rendering="crispEdges"/>
<polyline points="695.5,481.4 706.1,491.9" fill="none" stroke="#8282d8" stroke-width="1" shape-rendering="crispEdges"/>
<polyline points="708.7,491.9 721.9,488.0 750.0,486.7" fill="none" stroke="#8282d8" stroke-width="1" shape-rendering="crispEdges"/>
<polyline points="741.7,477.4 750.0,472.2" fill="none" stroke="#8282d8" stroke-width="1" shape-rendering="crispEdges"/>
<polyline points="708.7,488.0 711.4,536.8" fill="none" stroke="#8282d8" stroke-width="1" shape-rendering="crispEdges"/>
<polyline points="714.0,488.0 715.3,536.8" fill="none" stroke="#8282d8" stroke-width="1" shape-rendering="crispEdges"/>
<polyline points="719.3,488.0 720.6,539.4" fill="none" stroke="#8282d8" stroke-width="1" shape-rendering="crispEdges"/>
<polyline points="724.6,486.7 725.9,539.4" fill="none" stroke="#8282d8" stroke-width="1" shape-rendering="crispEdges"/>
<polyline points="729.8,486.7 731.2,540.8" fill="none" stroke="#8282d8" stroke-width="1" shape-rendering="crispEdges"/>
<polyline points="735.1,484.0 736.4,536.8" fill="none" stroke="#8282d8" stroke-width="1" shape-rendering="crispEdges"/>
<polyline points="740.4,484.0 741.7,534.2" fill="none" stroke="#8282d8" stroke-width="1" shape-rendering="crispEdges"/>
<polyline points="745.7,481.4 747.0,515.7" fill="none" stroke="#8282d8" stroke-width="1" shape-rendering="crispEdges"/>
<polyline points="706.1,494.6 750.0,494.6" fill="none" stroke="#8282d8" stroke-width="1" shape-rendering="crispEdges"/>
<polyline points="706.1,499.9 748.3,499.9" fill="none" stroke="#8282d8" stroke-width="1" shape-rendering="crispEdges"/>
<polyline points="707.4,505.1 750.0,505.1" fill="none" stroke="#8282d8" stroke-width="1" shape-rendering="crispEdges"/>
<polyline points="708.7,510.4 750.0,513.0" fill="none" stroke="#8282d8" stroke-width="1" shape-rendering="crispEdges"/>
<polyline points="708.7,515.7 745.7,517.0" fill="none" stroke="#8282d8" stroke-width="1" shape-rendering="crispEdges"/>
<polyline points="708.7,521.0 743.0,521.0" fill="none" stroke="#8282d8" stroke-width="1" shape-rendering="crispEdges"/>
<polyline points="708.7,526.2 743.0,526.2" fill="none" stroke="#8282d8" stroke-width="1" shape-rendering="crispEdges"/>
<polyline points="712.7,531.5 737.8,532.8" fill="none" stroke="#8282d8" stroke-width="1" shape-rendering="crispEdges"/>
<polyline points="706.1,465.6 750.0,468.2" fill="none" stroke="#8282d8" stroke-width="1" shape-rendering="crispEdges"/>
<polyline points="708.7,470.8 750.0,473.5" fill="none" stroke="#8282d8" stroke-width="1" shape-rendering="crispEdges"/>
<polyline points="708.7,477.4 735.1,481.4" fill="none" stroke="#8282d8" stroke-width="1" shape-rendering="crispEdges"/>
<polyline points="716.6,465.6 721.9,481.4" fill="none" stroke="#8282d8" stroke-width="1" shape-rendering="crispEdges"/>
<polyline points="735.1,466.9 739.1,481.4" fill="none" stroke="#8282d8" stroke-width="1" shape-rendering="crispEdges"/>
<polyline points="786.2,494.6 796.7,478.7 808.6,455.0" fill="none" stroke="#8282d8" stroke-width="1" shape-rendering="crispEdges"/>
<polyline points="790.1,490.6 800.7,505.1 800.7,488.0 803.3,481.4 819.2,462.9 821.8,455.0" fill="none" stroke="#8282d8" stroke-width="1" shape-rendering="crispEdges"/>
<polyline points="817.8,505.1 832.3,481.4 840.3,468.2 844.2,455.0" fill="none" stroke="#8282d8" stroke-width="1" shape-rendering="crispEdges"/>
<polyline points="761.1,547.3 786.2,498.5 795.4,481.4 799.4,455.0" fill="none" stroke="#8282d8" stroke-width="1" shape-rendering="crispEdges"/>
<polyline points="775.6,455.0 779.6,462.9 779.6,473.5 773.0,488.0" fill="none" stroke="#8282d8" stroke-width="1" shape-rendering="crispEdges"/>
<polyline points="798.0,555.0 808.6,523.6 819.2,501.2" fill="none" stroke="#8282d8" stroke-width="1" shape-rendering="crispEdges"/>
<polyline points="836.3,472.2 832.3,499.9 854.8,514.4 858.7,507.8 871.9,491.9 885.1,481.4 900.0,468.2" fill="none" stroke="#8282d8" stroke-width="1" shape-rendering="crispEdges"/>
<polyline points="841.6,468.2 864.0,477.4 877.2,480.1 900.0,477.4" fill="none" stroke="#8282d8" stroke-width="1" shape-rendering="crispEdges"/>
<polyline points="865.3,477.4 848.2,497.2 848.2,534.2" fill="none" stroke="#8282d8" stroke-width="1" shape-rendering="crispEdges"/>
<polyline points="882.5,481.4 878.5,502.5 866.6,523.6 861.4,555.0" fill="none" stroke="#8282d8" stroke-width="1" shape-rendering="crispEdges"/>
<polyline points="881.2,488.0 886.4,514.4 885.1,555.0" fill="none" stroke="#8282d8" stroke-width="1" shape-rendering="crispEdges"/>
<polyline points="835.0,455.0 871.9,476.1 900.0,462.9" fill="none" stroke="#8282d8" stroke-width="1" shape-rendering="crispEdges"/>
<polyline points="821.8,497.2 850.8,505.1 856.1,510.4" fill="none" stroke="#8282d8" stroke-width="1" shape-rendering="crispEdges"/>
<polyline points="832.3,514.4 850.8,518.3" fill="none" stroke="#8282d8" stroke-width="1" shape-rendering="crispEdges"/>
<polyline points="825.8,531.5 845.5,540.8 858.7,544.7" fill="none" stroke="#8282d8" stroke-width="1" shape-rendering="crispEdges"/>
<polyline points="800.7,536.8 871.9,544.7" fill="none" stroke="#8282d8" stroke-width="1" shape-rendering="crispEdges"/>
<polyline points="803.3,547.3 832.3,555.0" fill="none" stroke="#8282d8" stroke-width="1" shape-rendering="crispEdges"/>
<polyline points="740.0,481.4 759.8,486.7 786.2,491.9" fill="none" stroke="#8282d8" stroke-width="1" shape-rendering="crispEdges"/>
<polyline points="891.7,536.8 900.0,540.8" fill="none" stroke="#8282d8" stroke-width="1" shape-rendering="crispEdges"/>
<polyline points="742.6,472.2 757.2,465.6 763.7,457.6" fill="none" stroke="#8282d8" stroke-width="1" shape-rendering="crispEdges"/>
<polyline points="747.9,461.6 757.2,460.3" fill="none" stroke="#8282d8" stroke-width="1" shape-rendering="crispEdges"/>
<polyline points="742.6,468.2 742.6,540.8" fill="none" stroke="#8282d8" stroke-width="1" shape-rendering="crispEdges"/>
<polyline points="747.9,470.8 749.2,534.2" fill="none" stroke="#8282d8" stroke-width="1" shape-rendering="crispEdges"/>
<polyline points="753.2,474.8 753.2,528.9" fill="none" stroke="#8282d8" stroke-width="1" shape-rendering="crispEdges"/>
<polyline points="763.7,474.8 765.1,539.4" fill="none" stroke="#8282d8" stroke-width="1" shape-rendering="crispEdges"/>
<polyline points="769.0,481.4 770.3,536.8" fill="none" stroke="#8282d8" stroke-width="1" shape-rendering="crispEdges"/>
<polyline points="774.3,488.0 775.6,528.9" fill="none" stroke="#8282d8" stroke-width="1" shape-rendering="crispEdges"/>
<polyline points="779.6,486.7 779.6,518.3" fill="none" stroke="#8282d8" stroke-width="1" shape-rendering="crispEdges"/>
<polyline points="740.0,476.1 755.8,476.1" fill="none" stroke="#8282d8" stroke-width="1" shape-rendering="crispEdges"/>
<polyline points="740.0,491.9 784.9,494.6" fill="none" stroke="#8282d8" stroke-width="1" shape-rendering="crispEdges"/>
<polyline points="740.0,499.9 783.5,502.5" fill="none" stroke="#8282d8" stroke-width="1" shape-rendering="crispEdges"/>
<polyline points="740.0,507.8 782.2,507.8" fill="none" stroke="#8282d8" stroke-width="1" shape-rendering="crispEdges"/>
<polyline points="740.0,515.7 779.6,517.0" fill="none" stroke="#8282d8" stroke-width="1" shape-rendering="crispEdges"/>
<polyline points="740.0,523.6 776.9,523.6" fill="none" stroke="#8282d8" stroke-width="1" shape-rendering="crispEdges"/>
<polyline points="740.0,531.5 774.3,531.5" fill="none" stroke="#8282d8" stroke-width="1" shape-rendering="crispEdges"/>
<polyline points="761.1,485.3 784.9,485.3" fill="none" stroke="#8282d8" stroke-width="1" shape-rendering="crispEdges"/>
<polyline points="853.5,455.0 858.7,470.8" fill="none" stroke="#8282d8" stroke-width="1" shape-rendering="crispEdges"/>
<polyline points="862.7,455.0 866.6,468.2" fill="none" stroke="#8282d8" stroke-width="1" shape-rendering="crispEdges"/>
<polyline points="871.9,455.0 900.0,460.3" fill="none" stroke="#8282d8" stroke-width="1" shape-rendering="crispEdges"/>
<polyline points="885.1,455.0 891.7,466.9" fill="none" stroke="#8282d8" stroke-width="1" shape-rendering="crispEdges"/>
<polyline points="813.9,518.3 821.8,526.2" fill="none" stroke="#8282d8" stroke-width="1" shape-rendering="crispEdges"/>
<polyline points="813.9,526.2 824.4,523.6" fill="none" stroke="#8282d8" stroke-width="1" shape-rendering="crispEdges"/>
<polyline points="821.8,539.4 835.0,547.3" fill="none" stroke="#8282d8" stroke-width="1" shape-rendering="crispEdges"/>
<polyline points="813.9,542.1 819.2,555.0" fill="none" stroke="#8282d8" stroke-width="1" shape-rendering="crispEdges"/>
<polyline points="890.0,458.2 937.5,458.2 934.3,470.8 915.3,494.6" fill="none" stroke="#8282d8" stroke-width="1" shape-rendering="crispEdges"/>
<polyline points="890.0,470.8 921.7,459.7" fill="none" stroke="#8282d8" stroke-width="1" shape-rendering="crispEdges"/>
<polyline points="894.7,483.5 929.6,467.7" fill="none" stroke="#8282d8" stroke-width="1" shape-rendering="crispEdges"/>
<polyline points="905.8,493.0 937.5,474.0" fill="none" stroke="#8282d8" stroke-width="1" shape-rendering="crispEdges"/>
<polyline points="899.5,464.5 913.7,489.8" fill="none" stroke="#8282d8" stroke-width="1" shape-rendering="crispEdges"/>
<polyline points="913.7,459.7 929.6,486.7" fill="none" stroke="#8282d8" stroke-width="1" shape-rendering="crispEdges"/>
<polyline points="935.9,496.2 945.4,534.2 953.3,575.0" fill="none" stroke="#8282d8" stroke-width="1" shape-rendering="crispEdges"/>
<polyline points="935.9,496.2 956.5,543.7 964.4,575.0" fill="none" stroke="#8282d8" stroke-width="1" shape-rendering="crispEdges"/>
<polyline points="935.9,496.2 978.7,515.2 1010.3,546.8 1032.5,565.8 1056.2,570.6" fill="none" stroke="#8282d8" stroke-width="1" shape-rendering="crispEdges"/>
<polyline points="961.2,493.0 985.0,497.7 1029.3,494.6 1038.8,494.6 1053.1,515.2 1068.9,505.7" fill="none" stroke="#8282d8" stroke-width="1" shape-rendering="crispEdges"/>
<polyline points="977.1,493.0 978.7,470.8 994.5,461.3 997.7,455.0" fill="none" stroke="#8282d8" stroke-width="1" shape-rendering="crispEdges"/>
<polyline points="994.5,461.3 1000.8,494.6 1004.0,526.2 1016.7,537.3" fill="none" stroke="#8282d8" stroke-width="1" shape-rendering="crispEdges"/>
<polyline points="1016.7,457.4 1016.7,470.8 1024.6,470.8 1029.3,494.6 1026.2,526.2 1010.3,557.9 997.7,575.0" fill="none" stroke="#8282d8" stroke-width="1" shape-rendering="crispEdges"/>
<polyline points="1029.3,455.0 1042.0,475.6 1029.3,494.6" fill="none" stroke="#8282d8" stroke-width="1" shape-rendering="crispEdges"/>
<polyline points="1042.0,457.4 1042.0,475.6 1059.4,510.4" fill="none" stroke="#8282d8" stroke-width="1" shape-rendering="crispEdges"/>
<polyline points="1053.1,515.2 1042.0,534.2 1032.5,565.8 1029.3,575.0" fill="none" stroke="#8282d8" stroke-width="1" shape-rendering="crispEdges"/>
<polyline points="985.0,497.7 1004.0,526.2 1024.6,529.4 1042.0,537.3" fill="none" stroke="#8282d8" stroke-width="1" shape-rendering="crispEdges"/>
<polyline points="913.7,510.4 915.3,534.2 916.9,553.2 921.7,575.0" fill="none" stroke="#8282d8" stroke-width="1" shape-rendering="crispEdges"/>
<polyline points="899.5,518.3 899.5,529.4 929.6,543.7 953.3,553.2 1000.8,575.0" fill="none" stroke="#8282d8" stroke-width="1" shape-rendering="crispEdges"/>
<polyline points="890.0,545.2 932.7,554.7" fill="none" stroke="#8282d8" stroke-width="1" shape-rendering="crispEdges"/>
<polyline points="890.0,569.0 926.4,575.0" fill="none" stroke="#8282d8" stroke-width="1" shape-rendering="crispEdges"/>
<polyline points="966.0,510.4 985.0,502.5" fill="none" stroke="#8282d8" stroke-width="1" shape-rendering="crispEdges"/>
<polyline points="966.0,521.5 988.2,515.2" fill="none" stroke="#8282d8" stroke-width="1" shape-rendering="crispEdges"/>
<polyline points="977.1,531.0 991.3,524.7" fill="none" stroke="#8282d8" stroke-width="1" shape-rendering="crispEdges"/>
<polyline points="985.0,502.5 1004.0,497.7" fill="none" stroke="#8282d8" stroke-width="1" shape-rendering="crispEdges"/>
<polyline points="991.3,508.8 1004.0,507.2" fill="none" stroke="#8282d8" stroke-width="1" shape-rendering="crispEdges"/>
<polyline points="961.2,565.8 1008.7,556.3" fill="none" stroke="#8282d8" stroke-width="1" shape-rendering="crispEdges"/>
<polyline points="1016.7,499.3 1029.3,500.9" fill="none" stroke="#8282d8" stroke-width="1" shape-rendering="crispEdges"/>
<polyline points="1019.8,502.5 1029.3,504.1" fill="none" stroke="#8282d8" stroke-width="1" shape-rendering="crispEdges"/>
<polyline points="1016.7,516.7 1043.6,519.9" fill="none" stroke="#8282d8" stroke-width="1" shape-rendering="crispEdges"/>
<polyline points="1021.4,532.6 1037.2,538.9" fill="none" stroke="#8282d8" stroke-width="1" shape-rendering="crispEdges"/>
<polyline points="1043.6,543.7 1037.2,565.8" fill="none" stroke="#8282d8" stroke-width="1" shape-rendering="crispEdges"/>
<polyline points="1032.5,565.8 1048.3,562.7" fill="none" stroke="#8282d8" stroke-width="1" shape-rendering="crispEdges"/>
<polyline points="893.2,538.9 937.5,550.0" fill="none" stroke="#8282d8" stroke-width="1" shape-rendering="crispEdges"/>
<polyline points="937.5,502.5 985.0,531.0" fill="none" stroke="#8282d8" stroke-width="1" shape-rendering="crispEdges"/>
<polyline points="945.4,515.2 969.2,550.0" fill="none" stroke="#8282d8" stroke-width="1" shape-rendering="crispEdges"/>
<polyline points="953.3,493.0 988.2,510.4" fill="none" stroke="#8282d8" stroke-width="1" shape-rendering="crispEdges"/>
<polyline points="740.0,550.0 766.4,551.3 799.4,556.6 838.9,561.9 858.7,564.5 900.0,571.1" fill="none" stroke="#8282d8" stroke-width="2" shape-rendering="crispEdges"/>
<polyline points="798.0,550.0 796.7,557.9 792.8,573.7 790.1,580.3 790.1,590.9 779.6,600.1 775.6,617.3" fill="none" stroke="#8282d8" stroke-width="1" shape-rendering="crispEdges"/>
<polyline points="837.6,561.9 832.3,585.6 825.8,600.1 820.5,602.8 816.5,621.2 815.2,650.0" fill="none" stroke="#8282d8" stroke-width="1" shape-rendering="crispEdges"/>
<polyline points="817.8,621.2 845.5,650.0" fill="none" stroke="#8282d8" stroke-width="1" shape-rendering="crispEdges"/>
<polyline points="790.1,590.9 802.0,613.3 806.0,629.2" fill="none" stroke="#8282d8" stroke-width="1" shape-rendering="crispEdges"/>
<polyline points="802.0,613.3 816.5,621.2" fill="none" stroke="#8282d8" stroke-width="1" shape-rendering="crispEdges"/>
<polyline points="792.8,573.7 813.9,561.9 819.2,563.2" fill="none" stroke="#8282d8" stroke-width="1" shape-rendering="crispEdges"/>
<polyline points="792.8,576.4 832.3,584.3" fill="none" stroke="#8282d8" stroke-width="1" shape-rendering="crispEdges"/>
<polyline points="790.1,583.0 829.7,589.6" fill="none" stroke="#8282d8" stroke-width="1" shape-rendering="crispEdges"/>
<polyline points="790.1,588.3 825.8,594.9" fill="none" stroke="#8282d8" stroke-width="1" shape-rendering="crispEdges"/>
<polyline points="792.8,593.5 821.8,600.1" fill="none" stroke="#8282d8" stroke-width="1" shape-rendering="crispEdges"/>
<polyline points="795.4,597.5 808.6,601.5" fill="none" stroke="#8282d8" stroke-width="1" shape-rendering="crispEdges"/>
<polyline points="795.4,581.7 796.7,592.2" fill="none" stroke="#8282d8" stroke-width="1" shape-rendering="crispEdges"/>
<polyline points="802.0,583.0 803.3,593.5" fill="none" stroke="#8282d8" stroke-width="1" shape-rendering="crispEdges"/>
<polyline points="808.6,583.0 809.9,596.2" fill="none" stroke="#8282d8" stroke-width="1" shape-rendering="crispEdges"/>
<polyline points="815.2,584.3 816.5,596.2" fill="none" stroke="#8282d8" stroke-width="1" shape-rendering="crispEdges"/>
<polyline points="821.8,585.6 823.1,594.9" fill="none" stroke="#8282d8" stroke-width="1" shape-rendering="crispEdges"/>
<polyline points="787.5,608.0 802.0,610.7" fill="none" stroke="#8282d8" stroke-width="1" shape-rendering="crispEdges"/>
<polyline points="786.2,612.0 802.0,616.0" fill="none" stroke="#8282d8" stroke-width="1" shape-rendering="crispEdges"/>
<polyline points="816.5,578.4 832.3,584.3" fill="none" stroke="#8282d8" stroke-width="1" shape-rendering="crispEdges"/>
<polyline points="837.6,568.5 862.7,577.7" fill="none" stroke="#8282d8" stroke-width="1" shape-rendering="crispEdges"/>
<polyline points="858.7,552.6 852.1,573.7" fill="none" stroke="#8282d8" stroke-width="1" shape-rendering="crispEdges"/>
<polyline points="882.5,550.0 882.5,565.8 887.8,576.4 900.0,597.5" fill="none" stroke="#8282d8" stroke-width="1" shape-rendering="crispEdges"/>
<polyline points="849.5,550.0 887.8,564.5" fill="none" stroke="#8282d8" stroke-width="1" shape-rendering="crispEdges"/>
<polyline points="885.1,576.4 900.0,579.0" fill="none" stroke="#8282d8" stroke-width="1" shape-rendering="crispEdges"/>
<polyline points="799.4,552.6 837.6,560.6" fill="none" stroke="#8282d8" stroke-width="1" shape-rendering="crispEdges"/>
<polyline points="800.7,555.3 837.6,555.3" fill="none" stroke="#8282d8" stroke-width="1" shape-rendering="crispEdges"/>
<polyline points="819.2,550.0 813.9,559.2" fill="none" stroke="#8282d8" stroke-width="1" shape-rendering="crispEdges"/>
<polyline points="832.3,550.0 827.1,559.2" fill="none" stroke="#8282d8" stroke-width="1" shape-rendering="crispEdges"/>
<polyline points="806.0,550.0 803.3,557.9" fill="none" stroke="#8282d8" stroke-width="1" shape-rendering="crispEdges"/>
<polyline points="740.0,550.0 753.2,550.0" fill="none" stroke="#8282d8" stroke-width="1" shape-rendering="crispEdges"/>
<polyline points="757.2,550.0 761.1,555.3 766.4,551.3" fill="none" stroke="#8282d8" stroke-width="1" shape-rendering="crispEdges"/>
<polyline points="816.6,640.0 814.2,655.6 815.8,666.5" fill="none" stroke="#8282d8" stroke-width="1" shape-rendering="crispEdges"/>
<polyline points="836.0,640.0 846.9,652.5 848.5,658.7 859.4,668.8 887.4,685.9 918.5,705.4 937.2,722.5 949.6,742.7" fill="none" stroke="#8282d8" stroke-width="1" shape-rendering="crispEdges"/>
<polyline points="850.0,660.2 832.9,681.2" fill="none" stroke="#8282d8" stroke-width="1" shape-rendering="crispEdges"/>
<polyline points="859.4,668.8 854.7,685.1" fill="none" stroke="#8282d8" stroke-width="1" shape-rendering="crispEdges"/>
<polyline points="887.4,685.9 898.3,670.4" fill="none" stroke="#8282d8" stroke-width="1" shape-rendering="crispEdges"/>
<polyline points="887.4,685.9 892.1,692.9" fill="none" stroke="#8282d8" stroke-width="1" shape-rendering="crispEdges"/>
<polyline points="904.5,694.5 907.6,688.2" fill="none" stroke="#8282d8" stroke-width="1" shape-rendering="crispEdges"/>
<polyline points="904.5,694.5 910.7,699.1 904.5,705.4" fill="none" stroke="#8282d8" stroke-width="1" shape-rendering="crispEdges"/>
<polyline points="918.5,705.4 915.4,714.7 907.6,719.4" fill="none" stroke="#8282d8" stroke-width="1" shape-rendering="crispEdges"/>
<polyline points="790.0,115.3 800.6,122.7 817.4,135.3 828.0,143.8" fill="none" stroke="#8282d8" stroke-width="1" shape-rendering="crispEdges"/>
<polyline points="790.0,151.2 804.8,149.1 834.3,143.8 849.1,152.2 853.3,156.4 876.5,160.7 891.3,162.8" fill="none" stroke="#8282d8" stroke-width="1" shape-rendering="crispEdges"/>
<polyline points="790.0,134.3 804.8,149.1 817.4,177.5" fill="none" stroke="#8282d8" stroke-width="1" shape-rendering="crispEdges"/>
<polyline points="833.3,131.1 833.3,115.3 844.9,114.2 849.1,122.7 853.3,146.9 853.3,156.4 855.4,190.0" fill="none" stroke="#8282d8" stroke-width="1" shape-rendering="crispEdges"/>
<polyline points="847.0,130.1 853.3,143.8 856.5,138.5" fill="none" stroke="#8282d8" stroke-width="1" shape-rendering="crispEdges"/>
<polyline points="838.5,110.0 844.9,110.0 840.7,114.2" fill="none" stroke="#8282d8" stroke-width="1" shape-rendering="crispEdges"/>
<polyline points="858.6,110.0 858.6,116.3 870.2,116.3 874.4,121.6 895.5,121.6 899.8,129.0 898.7,136.4 890.3,137.4 891.3,162.8 895.5,190.0" fill="none" stroke="#8282d8" stroke-width="1" shape-rendering="crispEdges"/>
<polyline points="845.9,114.2 850.2,121.6" fill="none" stroke="#8282d8" stroke-width="1" shape-rendering="crispEdges"/>
<polyline points="877.6,141.7 889.2,140.6 889.2,148.0 877.6,149.1 877.6,141.7" fill="none" stroke="#8282d8" stroke-width="1" shape-rendering="crispEdges"/>
<polyline points="820.6,152.2 819.6,159.6 824.8,159.6 822.7,152.2" fill="none" stroke="#8282d8" stroke-width="1" shape-rendering="crispEdges"/>
<polyline points="818.5,169.1 826.9,161.7 840.7,158.5 849.1,156.4" fill="none" stroke="#8282d8" stroke-width="1" shape-rendering="crispEdges"/>
<polyline points="830.1,162.8 844.9,190.0" fill="none" stroke="#8282d8" stroke-width="1" shape-rendering="crispEdges"/>
<polyline points="832.2,169.1 840.7,169.1 842.8,175.4 838.5,183.9 832.2,183.9 832.2,169.1" fill="none" stroke="#8282d8" stroke-width="1" shape-rendering="crispEdges"/>
<polyline points="849.1,159.6 851.2,169.1 854.4,177.5" fill="none" stroke="#8282d8" stroke-width="1" shape-rendering="crispEdges"/>
<polyline points="853.3,160.7 863.9,160.7" fill="none" stroke="#8282d8" stroke-width="1" shape-rendering="crispEdges"/>
<polyline points="855.4,169.1 870.2,169.1" fill="none" stroke="#8282d8" stroke-width="1" shape-rendering="crispEdges"/>
<polyline points="857.5,177.5 870.2,177.5" fill="none" stroke="#8282d8" stroke-width="1" shape-rendering="crispEdges"/>
<polyline points="853.3,183.9 870.2,183.9" fill="none" stroke="#8282d8" stroke-width="1" shape-rendering="crispEdges"/>
<polyline points="857.5,160.7 858.6,190.0" fill="none" stroke="#8282d8" stroke-width="1" shape-rendering="crispEdges"/>
<polyline points="863.9,164.9 863.9,190.0" fill="none" stroke="#8282d8" stroke-width="1" shape-rendering="crispEdges"/>
<polyline points="868.1,169.1 869.2,190.0" fill="none" stroke="#8282d8" stroke-width="1" shape-rendering="crispEdges"/>
<polyline points="874.4,162.8 891.3,162.8" fill="none" stroke="#8282d8" stroke-width="1" shape-rendering="crispEdges"/>
<polyline points="876.5,164.9 877.6,177.5 888.2,175.4 888.2,170.2 879.7,170.2" fill="none" stroke="#8282d8" stroke-width="1" shape-rendering="crispEdges"/>
<polyline points="880.8,183.9 883.9,190.0" fill="none" stroke="#8282d8" stroke-width="1" shape-rendering="crispEdges"/>
<polyline points="894.5,183.9 910.0,179.7" fill="none" stroke="#8282d8" stroke-width="1" shape-rendering="crispEdges"/>
<polyline points="890.0,569.9 946.7,578.0 984.5,586.1 1043.9,602.9" fill="none" stroke="#8282d8" stroke-width="2" shape-rendering="crispEdges"/>
<polyline points="890.0,578.0 923.8,587.4 957.5,599.6 976.4,613.1" fill="none" stroke="#8282d8" stroke-width="1" shape-rendering="crispEdges"/>
<polyline points="890.0,582.0 907.6,609.0" fill="none" stroke="#8282d8" stroke-width="1" shape-rendering="crispEdges"/>
<polyline points="917.0,555.0 923.8,588.8 930.5,609.0 944.0,625.2" fill="none" stroke="#8282d8" stroke-width="1" shape-rendering="crispEdges"/>
<polyline points="946.7,555.0 949.4,572.6 957.5,588.8 957.5,609.0" fill="none" stroke="#8282d8" stroke-width="1" shape-rendering="crispEdges"/>
<polyline points="957.5,555.0 965.6,576.6 976.4,595.5 981.8,609.0" fill="none" stroke="#8282d8" stroke-width="1" shape-rendering="crispEdges"/>
<polyline points="965.6,576.6 995.3,567.2 1031.8,564.5 1060.1,572.6" fill="none" stroke="#8282d8" stroke-width="1" shape-rendering="crispEdges"/>
<polyline points="987.2,555.0 1004.8,563.1 1011.5,588.8 1015.6,595.5 1010.2,625.2" fill="none" stroke="#8282d8" stroke-width="1" shape-rendering="crispEdges"/>
<polyline points="1025.0,555.0 1034.5,565.8 1039.9,555.0" fill="none" stroke="#8282d8" stroke-width="1" shape-rendering="crispEdges"/>
<polyline points="1034.5,565.8 1035.8,576.6" fill="none" stroke="#8282d8" stroke-width="1" shape-rendering="crispEdges"/>
<polyline points="984.5,555.0 987.2,578.0 984.5,592.8 996.7,600.9" fill="none" stroke="#8282d8" stroke-width="1" shape-rendering="crispEdges"/>
<polyline points="992.6,575.3 1015.6,586.1" fill="none" stroke="#8282d8" stroke-width="1" shape-rendering="crispEdges"/>
<polyline points="1000.7,572.6 1018.3,576.6" fill="none" stroke="#8282d8" stroke-width="1" shape-rendering="crispEdges"/>
<polyline points="903.5,587.4 910.3,590.1 919.7,586.1 934.6,591.5" fill="none" stroke="#8282d8" stroke-width="1" shape-rendering="crispEdges"/>
<polyline points="923.8,588.8 934.6,579.3 944.0,582.0" fill="none" stroke="#8282d8" stroke-width="1" shape-rendering="crispEdges"/>
<polyline points="914.3,611.7 930.5,629.3" fill="none" stroke="#8282d8" stroke-width="1" shape-rendering="crispEdges"/>
<polyline points="900.8,598.2 923.8,592.8 957.5,599.6" fill="none" stroke="#8282d8" stroke-width="1" shape-rendering="crispEdges"/>
<polyline points="930.5,595.5 942.7,599.6" fill="none" stroke="#8282d8" stroke-width="1" shape-rendering="crispEdges"/>
<polyline points="621.8,470.0 621.8,484.5 640.6,497.6 663.9,510.6 675.5,517.9 687.1,523.7 700.0,529.5" fill="none" stroke="#8282d8" stroke-width="1" shape-rendering="crispEdges"/>
<polyline points="640.6,470.0 639.2,496.1 618.9,506.3" fill="none" stroke="#8282d8" stroke-width="1" shape-rendering="crispEdges"/>
<polyline points="640.6,497.6 633.4,513.5 617.4,542.6 608.7,574.5" fill="none" stroke="#8282d8" stroke-width="1" shape-rendering="crispEdges"/>
<polyline points="643.5,500.5 655.2,517.9 650.8,533.9 636.3,554.2" fill="none" stroke="#8282d8" stroke-width="1" shape-rendering="crispEdges"/>
<polyline points="658.1,484.5 678.4,491.8 681.3,488.9" fill="none" stroke="#8282d8" stroke-width="1" shape-rendering="crispEdges"/>
<polyline points="675.5,487.4 681.3,493.2" fill="none" stroke="#8282d8" stroke-width="1" shape-rendering="crispEdges"/>
<polyline points="682.7,478.7 700.0,475.8" fill="none" stroke="#8282d8" stroke-width="1" shape-rendering="crispEdges"/>
<polyline points="685.6,483.1 700.0,478.7" fill="none" stroke="#8282d8" stroke-width="1" shape-rendering="crispEdges"/>
<polyline points="684.2,488.9 700.0,484.5" fill="none" stroke="#8282d8" stroke-width="1" shape-rendering="crispEdges"/>
<polyline points="687.1,493.2 700.0,490.3" fill="none" stroke="#8282d8" stroke-width="1" shape-rendering="crispEdges"/>
<polyline points="687.1,499.0 700.0,494.7" fill="none" stroke="#8282d8" stroke-width="1" shape-rendering="crispEdges"/>
<polyline points="690.0,481.6 692.9,503.4" fill="none" stroke="#8282d8" stroke-width="1" shape-rendering="crispEdges"/>
<polyline points="695.8,478.7 697.2,499.0" fill="none" stroke="#8282d8" stroke-width="1" shape-rendering="crispEdges"/>
<polyline points="618.9,541.1 634.8,545.5 643.5,551.3 649.3,557.1" fill="none" stroke="#8282d8" stroke-width="1" shape-rendering="crispEdges"/>
<polyline points="653.7,517.9 640.6,539.7 634.8,551.3" fill="none" stroke="#8282d8" stroke-width="1" shape-rendering="crispEdges"/>
<polyline points="661.0,525.2 643.5,557.1" fill="none" stroke="#8282d8" stroke-width="1" shape-rendering="crispEdges"/>
<polyline points="668.2,535.3 652.2,562.9" fill="none" stroke="#8282d8" stroke-width="1" shape-rendering="crispEdges"/>
<polyline points="666.8,513.5 678.4,525.2" fill="none" stroke="#8282d8" stroke-width="1" shape-rendering="crispEdges"/>
<polyline points="672.6,516.4 681.3,513.5" fill="none" stroke="#8282d8" stroke-width="1" shape-rendering="crispEdges"/>
<polyline points="678.4,513.5 687.1,513.5" fill="none" stroke="#8282d8" stroke-width="1" shape-rendering="crispEdges"/>
<polyline points="633.4,545.5 643.5,548.4" fill="none" stroke="#8282d8" stroke-width="1" shape-rendering="crispEdges"/>
<polyline points="608.7,574.5 629.0,557.1" fill="none" stroke="#8282d8" stroke-width="1" shape-rendering="crispEdges"/>
<polyline points="621.8,557.1 636.3,554.2" fill="none" stroke="#8282d8" stroke-width="1" shape-rendering="crispEdges"/>
<polyline points="674.0,539.7 678.4,545.5" fill="none" stroke="#8282d8" stroke-width="1" shape-rendering="crispEdges"/>
<polyline points="655.2,517.9 668.2,520.8 676.9,525.2" fill="none" stroke="#8282d8" stroke-width="1" shape-rendering="crispEdges"/>
<polyline points="623.2,494.7 621.8,506.3" fill="none" stroke="#8282d8" stroke-width="1" shape-rendering="crispEdges"/>
<polyline points="629.0,470.0 634.8,478.7" fill="none" stroke="#8282d8" stroke-width="1" shape-rendering="crispEdges"/>
<polyline points="631.9,472.9 643.5,470.0" fill="none" stroke="#8282d8" stroke-width="1" shape-rendering="crispEdges"/>
<polygon points="525,124 520,125 513,133 510,137 491,138 475,145 461,161 444,173 422,185 425,194 436,200 445,199 465,212 483,197 500,177 503,183 516,177 524,185 519,202 525,210 531,241 539,240 541,252 560,276 556,282 558.3,290 561,300.6 561.6,313 553,315 558,324.3 555.6,348 547,362 555.6,379.7 564.4,381.3 550.6,388.6 561,403.7 577,426.8 565.7,436.7 572.3,442 540,467.7 540,472.3 607,469.5 612.6,480 622.3,493 621.7,503.8 613,532.8 603.2,539.4 616.4,555 637,579 651,563 657,566 670.5,555 677,548 686.3,532.8 722,542 727,548 732.5,544.7 758,544 757,550 755.8,555.3 762.4,560.6 763.7,567 757,573 761,580.3 751.9,593.5 751.9,602.8 765,606.7 771.7,612 771.7,616 804.6,630.5 803.3,639.7 797,650 805,652.5 805,664.9 815,666.5 833,681.2 847.7,693.7 853.2,686.7 859.4,682.8 864,680.8 867.2,682.8 869.5,691.4 875,697.6 879.6,702.3 884.3,700.7 910.7,717.8 904.5,719.4 907.6,728 915.4,731.8 921.6,738.8 931,743.5 930.2,747.4 943.4,756 949.6,747.4 957.4,742.7 951.2,731.8 945,724.8 938.8,705.4 955.9,689.8 954.3,680.5 943.4,668 935.6,663.3 920,650.9 933.3,640 927.8,645 952,609 956,609 964.3,619.8 967,629.3 976.4,617 977.8,609 984.5,608.3 992.6,617 1011.5,627.2 1027.7,636 1045.3,601 1058.8,579.3 1061.8,575 1069,554.7 1072,542 1069,504 1064,483.5 1055.5,457.4 1040,380 1010,320 975,299 970,296 971,292 991,287 1004,282 1013,276 1004,274 1009,267 1004,259 999,242 983,251 970,260 980,267 978,273 944.7,273.4 921.5,269 910,265.4 908.5,248 901.2,232 902,224.8 910,220.5 917.2,214.7 918.6,204.5 914.3,198.7 911.4,190 912,180 910,175 904,165 903,117 912,108.6 908,92.8 906,77 903.3,66.4 897.4,57 898,50.6 902.7,45.3 900.7,43.3 892.8,51.9 882,57 878,57 863.7,55 854.5,50 851.7,60 850,64.6 846,71 841,68 837,70 836,76.5 832,75.8 821.4,69.2 814,70 810.8,81.8 792.3,84.4 788.4,87 787.7,93 783,93.6 781.8,84.4 776.5,87 775,70.6 737.6,88 736,98 739,99.6 739.6,110 741.6,108.8 741.6,116.7 733.6,126 735,130 738,141.8 743.5,148.4 755.4,160 762,165 751,187 704,185 684,183 673,173 668,152 647,146 634,153 623,162 620,170 593,162 586,146 575,138 550,131 546,153" fill="none" stroke="#0a800a" stroke-width="1" shape-rendering="crispEdges"/>
<polyline points="525,121 546,153 565,160 594,162 623,169 668,181 704,185 780,182 807,188 818.7,195.4 876.6,212.5 883.8,219 889.6,253.8 896.9,264 910,266 921.5,269 944.7,273.4 980,274 1001,274 1028,299" fill="none" stroke="#8a6a5a" stroke-width="1.1" shape-rendering="crispEdges"/>
<polyline points="560,160 576,170 586,186 592.8,200 603.3,217 624.4,251.5 643,272 669.3,300 700,330" fill="none" stroke="#8a6a5a" stroke-width="1.1" shape-rendering="crispEdges"/>
<polyline points="655,137.8 673.5,175.4 681,186 703.8,220 706.4,223.7 724.9,250 729.5,264.6 729.5,300" fill="none" stroke="#8a6a5a" stroke-width="1.1" shape-rendering="crispEdges"/>
<polyline points="936.3,39 939.6,51.9 939,61 924.4,81 915,98 914.5,116.5 915.9,140 920,180 926,233 917,299" fill="none" stroke="#8a6a5a" stroke-width="1.1" shape-rendering="crispEdges"/>
<polyline points="1001,299 1080,270 1063,299" fill="none" stroke="#8a6a5a" stroke-width="1.1" shape-rendering="crispEdges"/>
<polyline points="500,474.5 590,470 642.8,467.5 690,464.2 719,463.6 728.5,468 741.7,477.4 753,478.7 759.8,481.4 786,494.6 817.8,507.8 827,514.4 849.5,535.5 862.7,536 866.6,555 900,587 949,639" fill="none" stroke="#8a6a5a" stroke-width="1.1" shape-rendering="crispEdges"/>
<polyline points="766.4,457 759.8,472 758.5,494.6 753,521 748,555 740,578" fill="none" stroke="#8a6a5a" stroke-width="1.1" shape-rendering="crispEdges"/>
<polyline points="767.7,457 765,474.8 770,482.7" fill="none" stroke="#8a6a5a" stroke-width="1.1" shape-rendering="crispEdges"/>
<polyline points="862.7,536 900,510.4" fill="none" stroke="#8a6a5a" stroke-width="1.1" shape-rendering="crispEdges"/>
<polyline points="862.7,536 890,516 937.5,486.7 975.5,461.3 988,457.4" fill="none" stroke="#8a6a5a" stroke-width="1.1" shape-rendering="crispEdges"/>
<polyline points="864,550 890,520.7 945.4,483.5 980,462 990,457" fill="none" stroke="#8a6a5a" stroke-width="1.1" shape-rendering="crispEdges"/>
<circle cx="772.5" cy="92.5" r="4.2" fill="url(#myellow)" shape-rendering="auto"/>
<circle cx="782.5" cy="98.5" r="4.2" fill="url(#mgray)" shape-rendering="auto"/>
<circle cx="789.5" cy="96.5" r="4.2" fill="url(#mgray)" shape-rendering="auto"/>
<circle cx="811.5" cy="93.5" r="4.2" fill="url(#myellow)" shape-rendering="auto"/>
<circle cx="805.5" cy="100.5" r="4.2" fill="url(#myellow)" shape-rendering="auto"/>
<circle cx="809.5" cy="110.5" r="4.2" fill="url(#mpurple)" shape-rendering="auto"/>
<circle cx="797.5" cy="118.5" r="4.2" fill="url(#mgray)" shape-rendering="auto"/>
<circle cx="896.5" cy="115.5" r="4.2" fill="url(#myellow)" shape-rendering="auto"/>
<circle cx="848.5" cy="126.5" r="4.2" fill="url(#myellow)" shape-rendering="auto"/>
<circle cx="878.5" cy="130.5" r="4.2" fill="url(#myellow)" shape-rendering="auto"/>
<circle cx="833.5" cy="136.5" r="4.2" fill="url(#mcyan)" shape-rendering="auto"/>
<circle cx="838.5" cy="144.5" r="4.2" fill="url(#mgray)" shape-rendering="auto"/>
<circle cx="849.5" cy="157.5" r="4.2" fill="url(#myellow)" shape-rendering="auto"/>
<circle cx="872.5" cy="157.5" r="4.2" fill="url(#myellow)" shape-rendering="auto"/>
<circle cx="811.5" cy="176.5" r="4.2" fill="url(#mgreen)" shape-rendering="auto"/>
<circle cx="825.5" cy="175.5" r="4.2" fill="url(#mgreen)" shape-rendering="auto"/>
<circle cx="825.5" cy="183.5" r="4.2" fill="url(#mgreen)" shape-rendering="auto"/>
<circle cx="808.5" cy="188.5" r="4.2" fill="url(#mpurple)" shape-rendering="auto"/>
<circle cx="725.5" cy="208.5" r="4.2" fill="url(#myellow)" shape-rendering="auto"/>
<circle cx="739.2" cy="238.1" r="4.2" fill="url(#myellow)" shape-rendering="auto"/>
<circle cx="880.5" cy="207.5" r="4.2" fill="url(#myellow)" shape-rendering="auto"/>
<circle cx="878.5" cy="216.5" r="4.2" fill="url(#mblue)" shape-rendering="auto"/>
<circle cx="896.5" cy="219.5" r="4.2" fill="url(#mgreen)" shape-rendering="auto"/>
<circle cx="895.2" cy="236.9" r="4.2" fill="url(#mgreen)" shape-rendering="auto"/>
<circle cx="911.5" cy="198.5" r="4.2" fill="url(#myellow)" shape-rendering="auto"/>
<circle cx="836.5" cy="225.5" r="4.2" fill="url(#myellow)" shape-rendering="auto"/>
<circle cx="459.5" cy="187.5" r="4.2" fill="url(#myellow)" shape-rendering="auto"/>
<circle cx="550.5" cy="142.5" r="4.2" fill="url(#myellow)" shape-rendering="auto"/>
<circle cx="665.5" cy="179.5" r="4.2" fill="url(#mpink)" shape-rendering="auto"/>
<circle cx="670.5" cy="190.5" r="4.2" fill="url(#mpink)" shape-rendering="auto"/>
<circle cx="666.5" cy="205.5" r="4.2" fill="url(#myellow)" shape-rendering="auto"/>
<circle cx="661.5" cy="217.5" r="4.2" fill="url(#myellow)" shape-rendering="auto"/>
<circle cx="613.5" cy="220.5" r="4.2" fill="url(#myellow)" shape-rendering="auto"/>
<circle cx="629.5" cy="230.5" r="4.2" fill="url(#myellow)" shape-rendering="auto"/>
<circle cx="634.5" cy="236.5" r="4.2" fill="url(#myellow)" shape-rendering="auto"/>
<circle cx="639.5" cy="255.5" r="4.2" fill="url(#myellow)" shape-rendering="auto"/>
<circle cx="648.5" cy="264.5" r="4.2" fill="url(#myellow)" shape-rendering="auto"/>
<circle cx="655.5" cy="264.5" r="4.2" fill="url(#mgreen)" shape-rendering="auto"/>
<circle cx="651.5" cy="270.5" r="4.2" fill="url(#myellow)" shape-rendering="auto"/>
<circle cx="672.5" cy="280.5" r="4.2" fill="url(#myellow)" shape-rendering="auto"/>
<circle cx="882.1" cy="276.1" r="4.2" fill="url(#myellow)" shape-rendering="auto"/>
<circle cx="876.1" cy="264.2" r="4.2" fill="url(#myellow)" shape-rendering="auto"/>
<circle cx="1003.5" cy="287.5" r="4.2" fill="url(#myellow)" shape-rendering="auto"/>
<circle cx="976.5" cy="297.5" r="4.2" fill="url(#myellow)" shape-rendering="auto"/>
<circle cx="546.5" cy="362.5" r="4.2" fill="url(#myellow)" shape-rendering="auto"/>
<circle cx="640.5" cy="375.5" r="4.2" fill="url(#myellow)" shape-rendering="auto"/>
<circle cx="645.5" cy="375.5" r="4.2" fill="url(#myellow)" shape-rendering="auto"/>
<circle cx="605.5" cy="414.5" r="4.2" fill="url(#myellow)" shape-rendering="auto"/>
<circle cx="718.5" cy="294.5" r="4.2" fill="url(#mpurple)" shape-rendering="auto"/>
<circle cx="733.5" cy="299.5" r="4.2" fill="url(#mgreen)" shape-rendering="auto"/>
<circle cx="818.5" cy="460.5" r="4.2" fill="url(#myellow)" shape-rendering="auto"/>
<circle cx="829.5" cy="464.5" r="4.2" fill="url(#mgreen)" shape-rendering="auto"/>
<circle cx="683.5" cy="505.5" r="4.2" fill="url(#mred)" shape-rendering="auto"/>
<circle cx="756.5" cy="515.5" r="4.2" fill="url(#myellow)" shape-rendering="auto"/>
<circle cx="820.5" cy="510.5" r="4.2" fill="url(#mgreen)" shape-rendering="auto"/>
<circle cx="830.5" cy="536.5" r="4.2" fill="url(#myellow)" shape-rendering="auto"/>
<circle cx="827.5" cy="540.5" r="4.2" fill="url(#myellow)" shape-rendering="auto"/>
<circle cx="876.5" cy="552.5" r="4.2" fill="url(#myellow)" shape-rendering="auto"/>
<circle cx="898.1" cy="554.5" r="4.2" fill="url(#myellow)" shape-rendering="auto"/>
<circle cx="880.5" cy="583.5" r="4.2" fill="url(#mblue)" shape-rendering="auto"/>
<circle cx="873.5" cy="587.5" r="4.2" fill="url(#mgreen)" shape-rendering="auto"/>
<circle cx="785.4" cy="615.1" r="4.2" fill="url(#myellow)" shape-rendering="auto"/>
<circle cx="931.3" cy="497.1" r="4.2" fill="url(#myellow)" shape-rendering="auto"/>
<circle cx="926.1" cy="505.4" r="4.2" fill="url(#myellow)" shape-rendering="auto"/>
<circle cx="912.5" cy="607.5" r="4.2" fill="url(#myellow)" shape-rendering="auto"/>
<circle cx="940.5" cy="607.5" r="4.2" fill="url(#myellow)" shape-rendering="auto"/>
<circle cx="956.5" cy="608.5" r="4.2" fill="url(#myellow)" shape-rendering="auto"/>
<circle cx="970.5" cy="599.5" r="4.2" fill="url(#mgreen)" shape-rendering="auto"/>
<circle cx="975.5" cy="601.5" r="4.2" fill="url(#myellow)" shape-rendering="auto"/>
<circle cx="672.5" cy="280.5" r="9.2" fill="none" stroke="#0000ff" stroke-width="2" shape-rendering="auto"/>
</svg>
</div>
<div id="tip">
<div class="tl" style="left:3px;top:2px;line-height:15px">-</div>
<div class="tl" style="left:3px;top:18px;line-height:15px">- ul. Lutycka,</div>
<div class="tl" style="left:3px;top:34px;line-height:15px">- ,</div>
<div style="position:absolute;left:3px;top:47.5px;width:15px;height:15px"><svg width="15" height="15" viewBox="0 0 16 16" style="display:block"><defs><radialGradient id="t10" cx="0.5" cy="0.35" r="0.6"><stop offset="0" stop-color="#80ffff"/><stop offset="0.55" stop-color="#20e0e8"/><stop offset="1" stop-color="#10a0b0"/></radialGradient></defs><circle cx="8" cy="8" r="7.6" fill="url(#t10)"/><ellipse cx="8" cy="12.3" rx="3" ry="1.6" fill="#ffffff" opacity="0.35"/></svg></div>
<div class="tl" style="left:18px;top:51.5px;line-height:15px">- Grzebiuszka ziemna Pelobates fuscus Płazy bezogonowe ścisła Pelobates fuscus PelFus,</div>
<div style="position:absolute;left:3px;top:65.5px;width:15px;height:15px"><svg width="15" height="15" viewBox="0 0 16 16" style="display:block"><defs><radialGradient id="t11" cx="0.5" cy="0.35" r="0.6"><stop offset="0" stop-color="#50f050"/><stop offset="0.55" stop-color="#10d010"/><stop offset="1" stop-color="#0a9a0a"/></radialGradient></defs><circle cx="8" cy="8" r="7.6" fill="url(#t11)"/><ellipse cx="8" cy="12.3" rx="3" ry="1.6" fill="#ffffff" opacity="0.35"/></svg></div>
<div class="tl" style="left:18px;top:69.5px;line-height:15px">- Kompleks żab zielonych Rana esculanta complex Płazy bezogonowe ścisła Rana esculanta complex RanEscCom,</div>
<div style="position:absolute;left:3px;top:83.5px;width:15px;height:15px"><svg width="15" height="15" viewBox="0 0 16 16" style="display:block"><defs><radialGradient id="t12" cx="0.5" cy="0.35" r="0.6"><stop offset="0" stop-color="#c040d0"/><stop offset="0.55" stop-color="#8a1a9a"/><stop offset="1" stop-color="#5a0a6a"/></radialGradient></defs><circle cx="8" cy="8" r="7.6" fill="url(#t12)"/><ellipse cx="8" cy="12.3" rx="3" ry="1.6" fill="#ffffff" opacity="0.35"/></svg></div>
<div class="tl" style="left:18px;top:87.5px;line-height:15px">- Ropucha szara Bufo bufo Płazy bezogonowe ścisła Bufo bufo BufBuf,</div>
<div style="position:absolute;left:3px;top:101.5px;width:15px;height:15px"><svg width="15" height="15" viewBox="0 0 16 16" style="display:block"><defs><radialGradient id="t13" cx="0.5" cy="0.35" r="0.6"><stop offset="0" stop-color="#c0c0c0"/><stop offset="0.55" stop-color="#8a8a8a"/><stop offset="1" stop-color="#5a5a5a"/></radialGradient></defs><circle cx="8" cy="8" r="7.6" fill="url(#t13)"/><ellipse cx="8" cy="12.3" rx="3" ry="1.6" fill="#ffffff" opacity="0.35"/></svg></div>
<div class="tl" style="left:18px;top:105.5px;line-height:15px">- Traszka zwyczajna Triturus vulgaris Płazy ogoniaste ścisła Triturus vulgaris TriVul,</div>
<div style="position:absolute;left:3px;top:119.5px;width:15px;height:15px"><svg width="15" height="15" viewBox="0 0 16 16" style="display:block"><defs><radialGradient id="t14" cx="0.5" cy="0.35" r="0.6"><stop offset="0" stop-color="#ffc8c8"/><stop offset="0.55" stop-color="#f09090"/><stop offset="1" stop-color="#c06a6a"/></radialGradient></defs><circle cx="8" cy="8" r="7.6" fill="url(#t14)"/><ellipse cx="8" cy="12.3" rx="3" ry="1.6" fill="#ffffff" opacity="0.35"/></svg></div>
<div class="tl" style="left:18px;top:123.5px;line-height:15px">- Żaba moczarowa Rana arvalis Płazy bezogonowe ścisła Rana arvalis RanArv,</div>
<div style="position:absolute;left:3px;top:137.5px;width:15px;height:15px"><svg width="15" height="15" viewBox="0 0 16 16" style="display:block"><defs><radialGradient id="t15" cx="0.5" cy="0.35" r="0.6"><stop offset="0" stop-color="#ffff80"/><stop offset="0.55" stop-color="#e8e010"/><stop offset="1" stop-color="#a8a000"/></radialGradient></defs><circle cx="8" cy="8" r="7.6" fill="url(#t15)"/><ellipse cx="8" cy="12.3" rx="3" ry="1.6" fill="#ffffff" opacity="0.35"/></svg></div>
<div class="tl" style="left:18px;top:141.5px;line-height:15px">- Żaba trawna Rana temporaria Płazy bezogonowe ścisła Rana temporaria RanTem,</div>
</div>
</body></html>
